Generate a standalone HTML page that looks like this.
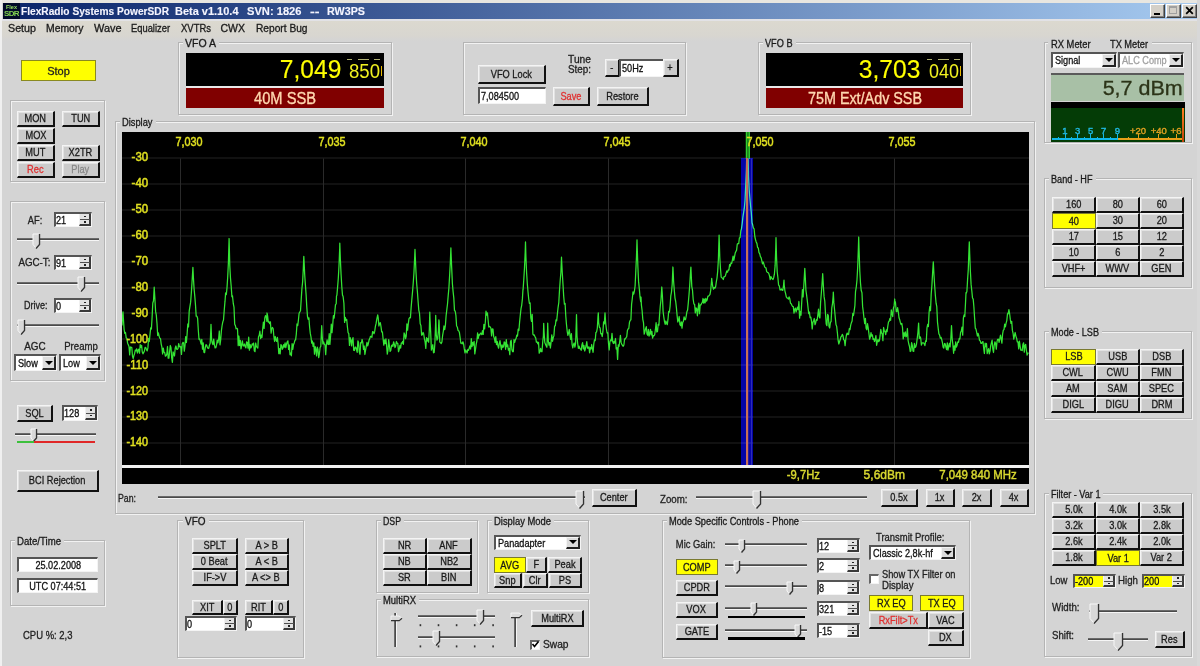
<!DOCTYPE html><html><head><meta charset="utf-8"><style>html,body{margin:0;padding:0}body{width:1200px;height:666px;overflow:hidden;position:relative;background:#d4d4d4;font-family:"Liberation Sans", sans-serif;font-size:11px;-webkit-text-stroke:0.3px currentColor}</style></head><body>
<div style="position:absolute;left:0px;top:0px;width:1200px;height:3px;background:#e8e6e0"></div>
<div style="position:absolute;left:0px;top:0px;width:2px;height:666px;background:#f0f0f0"></div>
<div style="position:absolute;left:1197px;top:0px;width:3px;height:666px;background:#d8d8d8"></div>
<div style="position:absolute;left:3px;top:3px;width:1194px;height:16px;background:linear-gradient(to right,#0a246a 0%,#a6caf0 100%)"></div>
<div style="position:absolute;left:3px;top:3px;width:17px;height:16px;background:#020a28"></div>
<svg style="position:absolute;left:4px;top:4px" width="15" height="13" viewBox="0 0 15 13"><g filter="url(#bl)"><text x="7.5" y="5" font-size="5.5" font-weight="bold" text-anchor="middle" fill="#98e060" font-family="Liberation Sans" style="-webkit-text-stroke:0.3px #98e060">Flex</text><text x="7.5" y="12" font-size="8" font-weight="bold" text-anchor="middle" fill="#80d050" font-family="Liberation Sans" style="-webkit-text-stroke:0.6px #80d050" letter-spacing="-0.6">SDR</text></g><defs><filter id="bl"><feGaussianBlur stdDeviation="0.35"/></filter></defs></svg>
<div style="position:absolute;left:21px;top:7.23px;font-size:10px;line-height:10px;color:#f4f4ff;white-space:nowrap;transform:scaleX(1.0164);transform-origin:left top;font-weight:bold;-webkit-text-stroke:0.1px #fff">FlexRadio Systems PowerSDR</div>
<div style="position:absolute;left:175px;top:7.23px;font-size:10px;line-height:10px;color:#f4f4ff;white-space:nowrap;transform:scaleX(1.0981);transform-origin:left top;font-weight:bold;-webkit-text-stroke:0.1px #fff">Beta v1.10.4</div>
<div style="position:absolute;left:247px;top:7.23px;font-size:10px;line-height:10px;color:#f4f4ff;white-space:nowrap;transform:scaleX(1.1140);transform-origin:left top;font-weight:bold;-webkit-text-stroke:0.1px #fff">SVN: 1826</div>
<div style="position:absolute;left:309.5px;top:7.23px;font-size:10px;line-height:10px;color:#f4f4ff;white-space:nowrap;transform:scaleX(1.4239);transform-origin:left top;font-weight:bold;-webkit-text-stroke:0.1px #fff">--</div>
<div style="position:absolute;left:327px;top:7.23px;font-size:10px;line-height:10px;color:#f4f4ff;white-space:nowrap;transform:scaleX(1.0737);transform-origin:left top;font-weight:bold;-webkit-text-stroke:0.1px #fff">RW3PS</div>
<div style="position:absolute;left:1150px;top:4px;width:15px;height:14px;box-sizing:border-box;background:#d4d0c8;border-top:1px solid #fff;border-left:1px solid #fff;border-right:1px solid #404040;border-bottom:1px solid #404040;box-shadow:inset -1px -1px 0 #808080"></div>
<div style="position:absolute;left:1166px;top:4px;width:15px;height:14px;box-sizing:border-box;background:#d4d0c8;border-top:1px solid #fff;border-left:1px solid #fff;border-right:1px solid #404040;border-bottom:1px solid #404040;box-shadow:inset -1px -1px 0 #808080"></div>
<div style="position:absolute;left:1182px;top:4px;width:15px;height:14px;box-sizing:border-box;background:#d4d0c8;border-top:1px solid #fff;border-left:1px solid #fff;border-right:1px solid #404040;border-bottom:1px solid #404040;box-shadow:inset -1px -1px 0 #808080"></div>
<div style="position:absolute;left:1154px;top:13px;width:6px;height:2px;background:#000"></div>
<div style="position:absolute;left:1169px;top:6px;width:8px;height:8px;box-sizing:border-box;border:1px solid #a0a0a0;border-top-width:2px"></div>
<svg style="position:absolute;left:1185px;top:6px" width="9" height="9"><path d="M1.2 1.2 L7.8 7.8 M7.8 1.2 L1.2 7.8" stroke="#000" stroke-width="1.8"/></svg>
<div style="position:absolute;left:2px;top:19px;width:1195px;height:22px;background:linear-gradient(to bottom,#dcd9cf,#d8d6d0 75%,#d4d4d4)"></div>
<div style="position:absolute;left:2px;top:19px;width:1195px;height:2px;background:#e2e2e6"></div>
<div style="position:absolute;left:8px;top:23.27px;font-size:10.5px;line-height:10.5px;color:#1a1a1a;white-space:nowrap;transform:scaleX(1.0199);transform-origin:left top;-webkit-text-stroke:0.3px #1a1a1a">Setup</div>
<div style="position:absolute;left:46px;top:23.27px;font-size:10.5px;line-height:10.5px;color:#1a1a1a;white-space:nowrap;transform:scaleX(0.9889);transform-origin:left top;-webkit-text-stroke:0.3px #1a1a1a">Memory</div>
<div style="position:absolute;left:93.5px;top:23.27px;font-size:10.5px;line-height:10.5px;color:#1a1a1a;white-space:nowrap;transform:scaleX(1.0396);transform-origin:left top;-webkit-text-stroke:0.3px #1a1a1a">Wave</div>
<div style="position:absolute;left:131px;top:23.27px;font-size:10.5px;line-height:10.5px;color:#1a1a1a;white-space:nowrap;transform:scaleX(0.8908);transform-origin:left top;-webkit-text-stroke:0.3px #1a1a1a">Equalizer</div>
<div style="position:absolute;left:181px;top:23.27px;font-size:10.5px;line-height:10.5px;color:#1a1a1a;white-space:nowrap;transform:scaleX(0.9018);transform-origin:left top;-webkit-text-stroke:0.3px #1a1a1a">XVTRs</div>
<div style="position:absolute;left:220.5px;top:23.27px;font-size:10.5px;line-height:10.5px;color:#1a1a1a;white-space:nowrap;transform:scaleX(1.0000);transform-origin:left top;-webkit-text-stroke:0.3px #1a1a1a">CWX</div>
<div style="position:absolute;left:255.5px;top:23.27px;font-size:10.5px;line-height:10.5px;color:#1a1a1a;white-space:nowrap;transform:scaleX(0.9694);transform-origin:left top;-webkit-text-stroke:0.3px #1a1a1a">Report Bug</div>
<div style="position:absolute;left:21px;top:60px;width:75px;height:21px;box-sizing:border-box;background:#ffff00;border:1px solid #8a8a20;display:flex;align-items:center;justify-content:center;font-size:11px;color:#222">Stop</div>
<div style="position:absolute;left:10px;top:100px;width:95px;height:82px;box-sizing:border-box;border:1px solid #b4b4b4;box-shadow:inset 1px 1px 0 #f2f2f2, 1px 1px 0 #f2f2f2"></div>
<div style="position:absolute;left:17px;top:111px;width:38px;height:16px;background:#cbcbcb;box-sizing:border-box;border-top:1px solid #f4f4f4;border-left:1px solid #f4f4f4;border-right:2px solid #111;border-bottom:2px solid #111;box-shadow:inset 1px 1px 0 #e2e2e2;display:flex;align-items:center;justify-content:center;font-size:10.5px;color:#1a1a1a;white-space:nowrap;line-height:10.5px"><span style="display:inline-block;transform:scaleX(0.88)">MON</span></div>
<div style="position:absolute;left:62px;top:111px;width:38px;height:16px;background:#cbcbcb;box-sizing:border-box;border-top:1px solid #f4f4f4;border-left:1px solid #f4f4f4;border-right:2px solid #111;border-bottom:2px solid #111;box-shadow:inset 1px 1px 0 #e2e2e2;display:flex;align-items:center;justify-content:center;font-size:10.5px;color:#1a1a1a;white-space:nowrap;line-height:10.5px"><span style="display:inline-block;transform:scaleX(0.88)">TUN</span></div>
<div style="position:absolute;left:17px;top:128px;width:38px;height:16px;background:#cbcbcb;box-sizing:border-box;border-top:1px solid #f4f4f4;border-left:1px solid #f4f4f4;border-right:2px solid #111;border-bottom:2px solid #111;box-shadow:inset 1px 1px 0 #e2e2e2;display:flex;align-items:center;justify-content:center;font-size:10.5px;color:#1a1a1a;white-space:nowrap;line-height:10.5px"><span style="display:inline-block;transform:scaleX(0.88)">MOX</span></div>
<div style="position:absolute;left:17px;top:145px;width:38px;height:16px;background:#cbcbcb;box-sizing:border-box;border-top:1px solid #f4f4f4;border-left:1px solid #f4f4f4;border-right:2px solid #111;border-bottom:2px solid #111;box-shadow:inset 1px 1px 0 #e2e2e2;display:flex;align-items:center;justify-content:center;font-size:10.5px;color:#1a1a1a;white-space:nowrap;line-height:10.5px"><span style="display:inline-block;transform:scaleX(0.88)">MUT</span></div>
<div style="position:absolute;left:62px;top:145px;width:38px;height:16px;background:#cbcbcb;box-sizing:border-box;border-top:1px solid #f4f4f4;border-left:1px solid #f4f4f4;border-right:2px solid #111;border-bottom:2px solid #111;box-shadow:inset 1px 1px 0 #e2e2e2;display:flex;align-items:center;justify-content:center;font-size:10.5px;color:#1a1a1a;white-space:nowrap;line-height:10.5px"><span style="display:inline-block;transform:scaleX(0.88)">X2TR</span></div>
<div style="position:absolute;left:17px;top:162px;width:38px;height:16px;background:#cbcbcb;box-sizing:border-box;border-top:1px solid #f4f4f4;border-left:1px solid #f4f4f4;border-right:2px solid #111;border-bottom:2px solid #111;box-shadow:inset 1px 1px 0 #e2e2e2;display:flex;align-items:center;justify-content:center;font-size:10.5px;color:#e03030;white-space:nowrap;line-height:10.5px"><span style="display:inline-block;transform:scaleX(0.88)">Rec</span></div>
<div style="position:absolute;left:62px;top:162px;width:38px;height:16px;background:#cbcbcb;box-sizing:border-box;border-top:1px solid #f4f4f4;border-left:1px solid #f4f4f4;border-right:2px solid #111;border-bottom:2px solid #111;box-shadow:inset 1px 1px 0 #e2e2e2;display:flex;align-items:center;justify-content:center;font-size:10.5px;color:#888;white-space:nowrap;line-height:10.5px"><span style="display:inline-block;transform:scaleX(0.88)">Play</span></div>
<div style="position:absolute;left:10px;top:201px;width:95px;height:180px;box-sizing:border-box;border:1px solid #b4b4b4;box-shadow:inset 1px 1px 0 #f2f2f2, 1px 1px 0 #f2f2f2"></div>
<div style="position:absolute;right:1158px;top:214.77px;font-size:10.5px;line-height:10.5px;color:#222;white-space:nowrap;text-align:right;transform:scaleX(0.8872);transform-origin:right top;">AF:</div>
<div style="position:absolute;left:54px;top:212px;width:38px;height:15px;box-sizing:border-box;background:#fff;border-top:2px solid #555;border-left:2px solid #555;border-right:1px solid #f4f4f4;border-bottom:1px solid #f4f4f4;font-size:10.5px;line-height:12px;color:#111;text-align:left;padding-left:0px;white-space:nowrap;overflow:hidden"><span style="display:inline-block;transform:scaleX(0.87);transform-origin:left center">21</span></div>
<div style="position:absolute;left:79px;top:214px;width:12px;height:12px;background:#e2e2e2;box-sizing:border-box;border-right:2px solid #3a3a3a;border-bottom:2px solid #3a3a3a;border-left:1px solid #f0f0f0"></div>
<div style="position:absolute;left:80px;top:219.3px;width:10px;height:1.2px;background:#505050"></div>
<div style="position:absolute;left:83.5px;top:215.9px;width:2px;height:1.5px;background:#222"></div>
<div style="position:absolute;left:83.5px;top:221.4px;width:2px;height:1.5px;background:#222"></div>
<div style="position:absolute;left:17px;top:238px;width:82px;height:3px;box-sizing:border-box;border-top:1px solid #6a6a6a;border-bottom:1px solid #f6f6f6;background:#4a4a4a"></div>
<svg style="position:absolute;left:32px;top:232.8px" width="10" height="18" viewBox="0 0 10 18"><path d="M1 1 H7 V11.5 L4.0 15 L1 11.5 Z" fill="#d8d8d8" stroke="#f8f8f8" stroke-width="1"/><path d="M7.5 1 V11.5 L4.0 15.5" fill="none" stroke="#333" stroke-width="1.4"/></svg>
<div style="position:absolute;right:1149.2px;top:256.77px;font-size:10.5px;line-height:10.5px;color:#222;white-space:nowrap;text-align:right;transform:scaleX(0.9296);transform-origin:right top;">AGC-T:</div>
<div style="position:absolute;left:54px;top:255px;width:38px;height:15px;box-sizing:border-box;background:#fff;border-top:2px solid #555;border-left:2px solid #555;border-right:1px solid #f4f4f4;border-bottom:1px solid #f4f4f4;font-size:10.5px;line-height:12px;color:#111;text-align:left;padding-left:0px;white-space:nowrap;overflow:hidden"><span style="display:inline-block;transform:scaleX(0.87);transform-origin:left center">91</span></div>
<div style="position:absolute;left:79px;top:257px;width:12px;height:12px;background:#e2e2e2;box-sizing:border-box;border-right:2px solid #3a3a3a;border-bottom:2px solid #3a3a3a;border-left:1px solid #f0f0f0"></div>
<div style="position:absolute;left:80px;top:262.3px;width:10px;height:1.2px;background:#505050"></div>
<div style="position:absolute;left:83.5px;top:258.9px;width:2px;height:1.5px;background:#222"></div>
<div style="position:absolute;left:83.5px;top:264.4px;width:2px;height:1.5px;background:#222"></div>
<div style="position:absolute;left:17px;top:281.5px;width:82px;height:3px;box-sizing:border-box;border-top:1px solid #6a6a6a;border-bottom:1px solid #f6f6f6;background:#4a4a4a"></div>
<svg style="position:absolute;left:77px;top:276.2px" width="10" height="18" viewBox="0 0 10 18"><path d="M1 1 H7 V11.5 L4.0 15 L1 11.5 Z" fill="#d8d8d8" stroke="#f8f8f8" stroke-width="1"/><path d="M7.5 1 V11.5 L4.0 15.5" fill="none" stroke="#333" stroke-width="1.4"/></svg>
<div style="position:absolute;right:1152.4px;top:299.77px;font-size:10.5px;line-height:10.5px;color:#222;white-space:nowrap;text-align:right;transform:scaleX(0.8570);transform-origin:right top;">Drive:</div>
<div style="position:absolute;left:54px;top:298px;width:38px;height:15px;box-sizing:border-box;background:#fff;border-top:2px solid #555;border-left:2px solid #555;border-right:1px solid #f4f4f4;border-bottom:1px solid #f4f4f4;font-size:10.5px;line-height:12px;color:#111;text-align:left;padding-left:0px;white-space:nowrap;overflow:hidden"><span style="display:inline-block;transform:scaleX(0.87);transform-origin:left center">0</span></div>
<div style="position:absolute;left:79px;top:300px;width:12px;height:12px;background:#e2e2e2;box-sizing:border-box;border-right:2px solid #3a3a3a;border-bottom:2px solid #3a3a3a;border-left:1px solid #f0f0f0"></div>
<div style="position:absolute;left:80px;top:305.3px;width:10px;height:1.2px;background:#505050"></div>
<div style="position:absolute;left:83.5px;top:301.9px;width:2px;height:1.5px;background:#222"></div>
<div style="position:absolute;left:83.5px;top:307.4px;width:2px;height:1.5px;background:#222"></div>
<div style="position:absolute;left:17px;top:324px;width:82px;height:3px;box-sizing:border-box;border-top:1px solid #6a6a6a;border-bottom:1px solid #f6f6f6;background:#4a4a4a"></div>
<svg style="position:absolute;left:16.5px;top:318.8px" width="10" height="18" viewBox="0 0 10 18"><path d="M1 1 H7 V11.5 L4.0 15 L1 11.5 Z" fill="#d8d8d8" stroke="#f8f8f8" stroke-width="1"/><path d="M7.5 1 V11.5 L4.0 15.5" fill="none" stroke="#333" stroke-width="1.4"/></svg>
<div style="position:absolute;left:-164.6px;width:400px;top:341.27px;font-size:10.5px;line-height:10.5px;color:#222;white-space:nowrap;text-align:center;transform:scaleX(0.9444);transform-origin:center top;">AGC</div>
<div style="position:absolute;left:-119.2px;width:400px;top:341.27px;font-size:10.5px;line-height:10.5px;color:#222;white-space:nowrap;text-align:center;transform:scaleX(0.9112);transform-origin:center top;">Preamp</div>
<div style="position:absolute;left:14px;top:354px;width:43px;height:17px;box-sizing:border-box;background:#fff;border-top:2px solid #555;border-left:2px solid #555;border-right:1px solid #f4f4f4;border-bottom:1px solid #f4f4f4;font-size:10.5px;line-height:14px;color:#111;text-align:left;padding-left:2px;white-space:nowrap;overflow:hidden"><span style="display:inline-block;transform:scaleX(0.87);transform-origin:left center">Slow</span></div>
<div style="position:absolute;left:42px;top:356px;width:14px;height:14px;background:#dcdcdc;box-sizing:border-box;border-top:1px solid #f4f4f4;border-left:1px solid #f4f4f4;border-right:2px solid #222;border-bottom:2px solid #222"></div>
<div style="position:absolute;left:45px;top:360.5px;width:0;height:0;border-left:4px solid transparent;border-right:4px solid transparent;border-top:4px solid #000"></div>
<div style="position:absolute;left:59px;top:354px;width:42px;height:17px;box-sizing:border-box;background:#fff;border-top:2px solid #555;border-left:2px solid #555;border-right:1px solid #f4f4f4;border-bottom:1px solid #f4f4f4;font-size:10.5px;line-height:14px;color:#111;text-align:left;padding-left:2px;white-space:nowrap;overflow:hidden"><span style="display:inline-block;transform:scaleX(0.87);transform-origin:left center">Low</span></div>
<div style="position:absolute;left:86px;top:356px;width:14px;height:14px;background:#dcdcdc;box-sizing:border-box;border-top:1px solid #f4f4f4;border-left:1px solid #f4f4f4;border-right:2px solid #222;border-bottom:2px solid #222"></div>
<div style="position:absolute;left:89px;top:360.5px;width:0;height:0;border-left:4px solid transparent;border-right:4px solid transparent;border-top:4px solid #000"></div>
<div style="position:absolute;left:17px;top:405px;width:36px;height:17px;background:#cbcbcb;box-sizing:border-box;border-top:1px solid #f4f4f4;border-left:1px solid #f4f4f4;border-right:2px solid #111;border-bottom:2px solid #111;box-shadow:inset 1px 1px 0 #e2e2e2;display:flex;align-items:center;justify-content:center;font-size:10.5px;color:#1a1a1a;white-space:nowrap;line-height:10.5px"><span style="display:inline-block;transform:scaleX(0.88)">SQL</span></div>
<div style="position:absolute;left:62px;top:405px;width:36px;height:16px;box-sizing:border-box;background:#fff;border-top:2px solid #555;border-left:2px solid #555;border-right:1px solid #f4f4f4;border-bottom:1px solid #f4f4f4;font-size:10.5px;line-height:13px;color:#111;text-align:left;padding-left:0px;white-space:nowrap;overflow:hidden"><span style="display:inline-block;transform:scaleX(0.87);transform-origin:left center">128</span></div>
<div style="position:absolute;left:85px;top:407px;width:12px;height:13px;background:#e2e2e2;box-sizing:border-box;border-right:2px solid #3a3a3a;border-bottom:2px solid #3a3a3a;border-left:1px solid #f0f0f0"></div>
<div style="position:absolute;left:86px;top:412.8px;width:10px;height:1.2px;background:#505050"></div>
<div style="position:absolute;left:89.5px;top:409.4px;width:2px;height:1.5px;background:#222"></div>
<div style="position:absolute;left:89.5px;top:414.9px;width:2px;height:1.5px;background:#222"></div>
<div style="position:absolute;left:15px;top:432.5px;width:81px;height:3px;box-sizing:border-box;border-top:1px solid #6a6a6a;border-bottom:1px solid #f6f6f6;background:#4a4a4a"></div>
<svg style="position:absolute;left:30px;top:427.9px" width="9" height="16" viewBox="0 0 9 16"><path d="M1 1 H6 V10.0 L3.5 13 L1 10.0 Z" fill="#d8d8d8" stroke="#f8f8f8" stroke-width="1"/><path d="M6.5 1 V10.0 L3.5 13.5" fill="none" stroke="#333" stroke-width="1.4"/></svg>
<div style="position:absolute;left:17px;top:441px;width:17px;height:2px;background:#3cc03c"></div>
<div style="position:absolute;left:34px;top:441px;width:61px;height:2px;background:#e02828"></div>
<div style="position:absolute;left:17px;top:470px;width:82px;height:22px;background:#cbcbcb;box-sizing:border-box;border-top:1px solid #f4f4f4;border-left:1px solid #f4f4f4;border-right:2px solid #111;border-bottom:2px solid #111;box-shadow:inset 1px 1px 0 #e2e2e2;display:flex;align-items:center;justify-content:center;font-size:10.5px;color:#1a1a1a;white-space:nowrap;line-height:10.5px"><span style="display:inline-block;transform:scaleX(0.88)">BCI Rejection</span></div>
<div style="position:absolute;left:10px;top:540px;width:95px;height:66px;box-sizing:border-box;border:1px solid #b4b4b4;box-shadow:inset 1px 1px 0 #f2f2f2, 1px 1px 0 #f2f2f2"></div>
<div style="position:absolute;left:15px;top:538px;width:49px;height:4px;background:#d4d4d4"></div>
<div style="position:absolute;left:17px;top:536.62px;font-size:10px;line-height:10px;color:#1a1a1a;white-space:nowrap;transform:scaleX(0.9614);transform-origin:left top;">Date/Time</div>
<div style="position:absolute;left:17px;top:557px;width:81px;height:15px;box-sizing:border-box;background:#fff;border-top:2px solid #555;border-left:2px solid #555;border-right:1px solid #f4f4f4;border-bottom:1px solid #f4f4f4;font-size:10.5px;line-height:12px;color:#111;text-align:center;padding-left:0px;white-space:nowrap;overflow:hidden"><span style="display:inline-block;transform:scaleX(0.87);transform-origin:center center">25.02.2008</span></div>
<div style="position:absolute;left:17px;top:578px;width:81px;height:15px;box-sizing:border-box;background:#fff;border-top:2px solid #555;border-left:2px solid #555;border-right:1px solid #f4f4f4;border-bottom:1px solid #f4f4f4;font-size:10.5px;line-height:12px;color:#111;text-align:center;padding-left:0px;white-space:nowrap;overflow:hidden"><span style="display:inline-block;transform:scaleX(0.87);transform-origin:center center">UTC 07:44:51</span></div>
<div style="position:absolute;left:22.8px;top:629.77px;font-size:10.5px;line-height:10.5px;color:#222;white-space:nowrap;transform:scaleX(0.9023);transform-origin:left top;">CPU %: 2,3</div>
<div style="position:absolute;left:178px;top:42px;width:214px;height:73px;box-sizing:border-box;border:1px solid #b4b4b4;box-shadow:inset 1px 1px 0 #f2f2f2, 1px 1px 0 #f2f2f2"></div>
<div style="position:absolute;left:183px;top:40px;width:36px;height:4px;background:#d4d4d4"></div>
<div style="position:absolute;left:185px;top:38.62px;font-size:10px;line-height:10px;color:#1a1a1a;white-space:nowrap;transform:scaleX(1.0525);transform-origin:left top;">VFO A</div>
<div style="position:absolute;left:186px;top:52.5px;width:198px;height:33.5px;background:#000"></div>
<div style="position:absolute;left:186px;top:86px;width:198px;height:2px;background:#e8e8e8"></div>
<div style="position:absolute;left:186px;top:88px;width:198px;height:20px;background:#800000"></div>
<div style="position:absolute;left:85.0px;width:400px;top:90.62px;font-size:16px;line-height:16px;color:#ffd8b0;white-space:nowrap;text-align:center;transform:scaleX(0.9172);transform-origin:center top;-webkit-text-stroke:0.35px #ffd8b0">40M SSB</div>
<div style="position:absolute;right:859px;top:55.89px;font-size:26.5px;line-height:26.5px;color:#ffff00;white-space:nowrap;text-align:right;transform:scaleX(0.9272);transform-origin:right top;-webkit-text-stroke:0.15px #ff0">7,049</div>
<div style="position:absolute;left:349px;top:61.71px;font-size:19.5px;line-height:19.5px;color:#f0f020;white-space:nowrap;transform:scaleX(0.9525);transform-origin:left top;-webkit-text-stroke:0px">850</div>
<div style="position:absolute;left:346.5px;top:58.8px;width:5.5px;height:1.2000000000000028px;background:#b0b070"></div>
<div style="position:absolute;left:357.5px;top:58.8px;width:11.5px;height:1.2000000000000028px;background:#b0b070"></div>
<div style="position:absolute;left:374px;top:58.8px;width:5.5px;height:1.2000000000000028px;background:#b0b070"></div>
<div style="position:absolute;left:380.5px;top:66px;width:1.5px;height:10px;background:#e8b800"></div>
<div style="position:absolute;left:758px;top:42px;width:213px;height:73px;box-sizing:border-box;border:1px solid #b4b4b4;box-shadow:inset 1px 1px 0 #f2f2f2, 1px 1px 0 #f2f2f2"></div>
<div style="position:absolute;left:763px;top:40px;width:32.5px;height:4px;background:#d4d4d4"></div>
<div style="position:absolute;left:765px;top:38.62px;font-size:10px;line-height:10px;color:#1a1a1a;white-space:nowrap;transform:scaleX(0.9162);transform-origin:left top;">VFO B</div>
<div style="position:absolute;left:766px;top:52.5px;width:197px;height:33.5px;background:#000"></div>
<div style="position:absolute;left:766px;top:86px;width:197px;height:2px;background:#e8e8e8"></div>
<div style="position:absolute;left:766px;top:88px;width:197px;height:20px;background:#800000"></div>
<div style="position:absolute;left:664.5px;width:400px;top:90.62px;font-size:16px;line-height:16px;color:#ffd8b0;white-space:nowrap;text-align:center;transform:scaleX(0.8964);transform-origin:center top;-webkit-text-stroke:0.35px #ffd8b0">75M Ext/Adv SSB</div>
<div style="position:absolute;right:279.5px;top:55.89px;font-size:26.5px;line-height:26.5px;color:#ffff00;white-space:nowrap;text-align:right;transform:scaleX(0.9272);transform-origin:right top;-webkit-text-stroke:0.15px #ff0">3,703</div>
<div style="position:absolute;left:929px;top:61.71px;font-size:19.5px;line-height:19.5px;color:#f0f020;white-space:nowrap;transform:scaleX(0.9217);transform-origin:left top;-webkit-text-stroke:0px">040</div>
<div style="position:absolute;left:926.5px;top:58.8px;width:5.5px;height:1.2000000000000028px;background:#b0b070"></div>
<div style="position:absolute;left:937.5px;top:58.8px;width:11.5px;height:1.2000000000000028px;background:#b0b070"></div>
<div style="position:absolute;left:954px;top:58.8px;width:5.5px;height:1.2000000000000028px;background:#b0b070"></div>
<div style="position:absolute;left:959.5px;top:66px;width:1.5px;height:10px;background:#e8b800"></div>
<div style="position:absolute;left:463px;top:42px;width:223px;height:73px;box-sizing:border-box;border:1px solid #b4b4b4;box-shadow:inset 1px 1px 0 #f2f2f2, 1px 1px 0 #f2f2f2"></div>
<div style="position:absolute;left:478px;top:65px;width:68px;height:19px;background:#cbcbcb;box-sizing:border-box;border-top:1px solid #f4f4f4;border-left:1px solid #f4f4f4;border-right:2px solid #111;border-bottom:2px solid #111;box-shadow:inset 1px 1px 0 #e2e2e2;display:flex;align-items:center;justify-content:center;font-size:10.5px;color:#1a1a1a;white-space:nowrap;line-height:10.5px"><span style="display:inline-block;transform:scaleX(0.88)">VFO Lock</span></div>
<div style="position:absolute;left:478px;top:87px;width:68px;height:17px;box-sizing:border-box;background:#fff;border-top:2px solid #555;border-left:2px solid #555;border-right:1px solid #f4f4f4;border-bottom:1px solid #f4f4f4;font-size:10.5px;line-height:14px;color:#111;text-align:left;padding-left:1px;white-space:nowrap;overflow:hidden"><span style="display:inline-block;transform:scaleX(0.87);transform-origin:left center">7,084500</span></div>
<div style="position:absolute;left:568px;top:54.27px;font-size:10.5px;line-height:10.5px;color:#222;white-space:nowrap;transform:scaleX(0.9768);transform-origin:left top;">Tune</div>
<div style="position:absolute;left:568px;top:63.77px;font-size:10.5px;line-height:10.5px;color:#222;white-space:nowrap;transform:scaleX(0.9376);transform-origin:left top;">Step:</div>
<div style="position:absolute;left:605px;top:59px;width:15px;height:18px;background:#cbcbcb;box-sizing:border-box;border-top:1px solid #f4f4f4;border-left:1px solid #f4f4f4;border-right:2px solid #111;border-bottom:2px solid #111;box-shadow:inset 1px 1px 0 #e2e2e2;display:flex;align-items:center;justify-content:center;font-size:10.5px;color:#1a1a1a;white-space:nowrap;line-height:10.5px"><span style="display:inline-block;transform:scaleX(0.88)">-</span></div>
<div style="position:absolute;left:619px;top:59px;width:45px;height:18px;box-sizing:border-box;background:#fff;border-top:2px solid #555;border-left:2px solid #555;border-right:1px solid #f4f4f4;border-bottom:1px solid #f4f4f4;font-size:10.5px;line-height:15px;color:#111;text-align:left;padding-left:1px;white-space:nowrap;overflow:hidden"><span style="display:inline-block;transform:scaleX(0.87);transform-origin:left center">50Hz</span></div>
<div style="position:absolute;left:663px;top:59px;width:16px;height:18px;background:#cbcbcb;box-sizing:border-box;border-top:1px solid #f4f4f4;border-left:1px solid #f4f4f4;border-right:2px solid #111;border-bottom:2px solid #111;box-shadow:inset 1px 1px 0 #e2e2e2;display:flex;align-items:center;justify-content:center;font-size:10.5px;color:#1a1a1a;white-space:nowrap;line-height:10.5px"><span style="display:inline-block;transform:scaleX(0.88)">+</span></div>
<div style="position:absolute;left:553px;top:87px;width:37px;height:19px;background:#cbcbcb;box-sizing:border-box;border-top:1px solid #f4f4f4;border-left:1px solid #f4f4f4;border-right:2px solid #111;border-bottom:2px solid #111;box-shadow:inset 1px 1px 0 #e2e2e2;display:flex;align-items:center;justify-content:center;font-size:10.5px;color:#e03030;white-space:nowrap;line-height:10.5px"><span style="display:inline-block;transform:scaleX(0.88)">Save</span></div>
<div style="position:absolute;left:597px;top:87px;width:52px;height:19px;background:#cbcbcb;box-sizing:border-box;border-top:1px solid #f4f4f4;border-left:1px solid #f4f4f4;border-right:2px solid #111;border-bottom:2px solid #111;box-shadow:inset 1px 1px 0 #e2e2e2;display:flex;align-items:center;justify-content:center;font-size:10.5px;color:#1a1a1a;white-space:nowrap;line-height:10.5px"><span style="display:inline-block;transform:scaleX(0.88)">Restore</span></div>
<div style="position:absolute;left:1044px;top:42px;width:148px;height:101px;box-sizing:border-box;border:1px solid #b4b4b4;box-shadow:inset 1px 1px 0 #f2f2f2, 1px 1px 0 #f2f2f2"></div>
<div style="position:absolute;left:1048px;top:40px;width:104px;height:4px;background:#d4d4d4"></div>
<div style="position:absolute;left:1051px;top:39.07px;font-size:10.5px;line-height:10.5px;color:#1a1a1a;white-space:nowrap;transform:scaleX(0.8908);transform-origin:left top;">RX Meter</div>
<div style="position:absolute;left:1110.3px;top:39.07px;font-size:10.5px;line-height:10.5px;color:#1a1a1a;white-space:nowrap;transform:scaleX(0.8799);transform-origin:left top;">TX Meter</div>
<div style="position:absolute;left:1051px;top:52px;width:66px;height:16px;box-sizing:border-box;background:#fff;border-top:2px solid #555;border-left:2px solid #555;border-right:1px solid #f4f4f4;border-bottom:1px solid #f4f4f4;font-size:10.5px;line-height:13px;color:#111;text-align:left;padding-left:2px;white-space:nowrap;overflow:hidden"><span style="display:inline-block;transform:scaleX(0.87);transform-origin:left center">Signal</span></div>
<div style="position:absolute;left:1102px;top:54px;width:14px;height:13px;background:#dcdcdc;box-sizing:border-box;border-top:1px solid #f4f4f4;border-left:1px solid #f4f4f4;border-right:2px solid #222;border-bottom:2px solid #222"></div>
<div style="position:absolute;left:1105px;top:58.0px;width:0;height:0;border-left:4px solid transparent;border-right:4px solid transparent;border-top:4px solid #000"></div>
<div style="position:absolute;left:1118px;top:52px;width:66px;height:16px;box-sizing:border-box;background:#fff;border-top:2px solid #555;border-left:2px solid #555;border-right:1px solid #f4f4f4;border-bottom:1px solid #f4f4f4;font-size:10.5px;line-height:13px;color:#a0a0a0;text-align:left;padding-left:2px;white-space:nowrap;overflow:hidden"><span style="display:inline-block;transform:scaleX(0.87);transform-origin:left center">ALC Comp</span></div>
<div style="position:absolute;left:1169px;top:54px;width:14px;height:13px;background:#dcdcdc;box-sizing:border-box;border-top:1px solid #f4f4f4;border-left:1px solid #f4f4f4;border-right:2px solid #222;border-bottom:2px solid #222"></div>
<div style="position:absolute;left:1172px;top:58.0px;width:0;height:0;border-left:4px solid transparent;border-right:4px solid transparent;border-top:4px solid #000"></div>
<div style="position:absolute;left:1051px;top:73px;width:133px;height:28px;background:#a8c0a6;border-top:2px solid #5a5a5a;box-sizing:border-box"></div>
<div style="position:absolute;right:17.5px;top:78.71px;font-size:19.5px;line-height:19.5px;color:#2c3418;white-space:nowrap;text-align:right;transform:scaleX(1.1015);transform-origin:right top;">5,7 dBm</div>
<div style="position:absolute;left:1051px;top:102px;width:134px;height:6px;background:#000"></div>
<div style="position:absolute;left:1051px;top:108px;width:134px;height:34px;background:#043c06"></div>
<div style="position:absolute;left:1182px;top:108px;width:2px;height:34px;background:linear-gradient(to bottom,#ff8020,#c04008)"></div>
<div style="position:absolute;left:1052px;top:138px;width:66px;height:2px;background:#10b8e8"></div>
<div style="position:absolute;left:1118px;top:138px;width:64px;height:2px;background:#e8a018"></div>
<div style="position:absolute;left:1064.5px;top:133.5px;width:1.2000000000000455px;height:5.5px;background:#10b8e8"></div>
<div style="position:absolute;left:865px;width:400px;top:125.88px;font-size:9.5px;line-height:9.5px;color:#20b8e0;white-space:nowrap;text-align:center;-webkit-text-stroke:0.4px #20b8e0">1</div>
<div style="position:absolute;left:1077.1px;top:133.5px;width:1.2000000000000455px;height:5.5px;background:#10b8e8"></div>
<div style="position:absolute;left:877.5999999999999px;width:400px;top:125.88px;font-size:9.5px;line-height:9.5px;color:#20b8e0;white-space:nowrap;text-align:center;-webkit-text-stroke:0.4px #20b8e0">3</div>
<div style="position:absolute;left:1090.1px;top:133.5px;width:1.2000000000000455px;height:5.5px;background:#10b8e8"></div>
<div style="position:absolute;left:890.5999999999999px;width:400px;top:125.88px;font-size:9.5px;line-height:9.5px;color:#20b8e0;white-space:nowrap;text-align:center;-webkit-text-stroke:0.4px #20b8e0">5</div>
<div style="position:absolute;left:1103.1px;top:133.5px;width:1.2000000000000455px;height:5.5px;background:#10b8e8"></div>
<div style="position:absolute;left:903.5999999999999px;width:400px;top:125.88px;font-size:9.5px;line-height:9.5px;color:#20b8e0;white-space:nowrap;text-align:center;-webkit-text-stroke:0.4px #20b8e0">7</div>
<div style="position:absolute;left:1116.9px;top:133.5px;width:1.2000000000000455px;height:5.5px;background:#10b8e8"></div>
<div style="position:absolute;left:917.4000000000001px;width:400px;top:125.88px;font-size:9.5px;line-height:9.5px;color:#20b8e0;white-space:nowrap;text-align:center;-webkit-text-stroke:0.4px #20b8e0">9</div>
<div style="position:absolute;left:1058.0px;top:136.5px;width:1.0px;height:2.5px;background:#10b8e8"></div>
<div style="position:absolute;left:1071.0px;top:136.5px;width:1.0px;height:2.5px;background:#10b8e8"></div>
<div style="position:absolute;left:1083.5px;top:136.5px;width:1.0px;height:2.5px;background:#10b8e8"></div>
<div style="position:absolute;left:1096.5px;top:136.5px;width:1.0px;height:2.5px;background:#10b8e8"></div>
<div style="position:absolute;left:1109.5px;top:136.5px;width:1.0px;height:2.5px;background:#10b8e8"></div>
<div style="position:absolute;left:1137.5px;top:133.5px;width:1.2000000000000455px;height:5.5px;background:#e8a018"></div>
<div style="position:absolute;left:938px;width:400px;top:125.88px;font-size:9.5px;line-height:9.5px;color:#e0a020;white-space:nowrap;text-align:center;-webkit-text-stroke:0.4px #e0a020">+20</div>
<div style="position:absolute;left:1158.2px;top:133.5px;width:1.2000000000000455px;height:5.5px;background:#e8a018"></div>
<div style="position:absolute;left:958.7px;width:400px;top:125.88px;font-size:9.5px;line-height:9.5px;color:#e0a020;white-space:nowrap;text-align:center;-webkit-text-stroke:0.4px #e0a020">+40</div>
<div style="position:absolute;left:1175.5px;top:133.5px;width:1.2000000000000455px;height:5.5px;background:#e8a018"></div>
<div style="position:absolute;left:976px;width:400px;top:125.88px;font-size:9.5px;line-height:9.5px;color:#e0a020;white-space:nowrap;text-align:center;-webkit-text-stroke:0.4px #e0a020">+6</div>
<div style="position:absolute;left:1127.5px;top:136.5px;width:1.0px;height:2.5px;background:#e8a018"></div>
<div style="position:absolute;left:1147.5px;top:136.5px;width:1.0px;height:2.5px;background:#e8a018"></div>
<div style="position:absolute;left:1167.5px;top:136.5px;width:1.0px;height:2.5px;background:#e8a018"></div>
<div style="position:absolute;left:115px;top:121px;width:920px;height:393px;box-sizing:border-box;border:1px solid #b4b4b4;box-shadow:inset 1px 1px 0 #f2f2f2, 1px 1px 0 #f2f2f2"></div>
<div style="position:absolute;left:120px;top:119px;width:35.5px;height:4px;background:#d4d4d4"></div>
<div style="position:absolute;left:122px;top:117.62px;font-size:10px;line-height:10px;color:#1a1a1a;white-space:nowrap;transform:scaleX(0.9300);transform-origin:left top;">Display</div>
<div style="position:absolute;left:122px;top:131.5px;width:907px;height:333.0px;background:#000"></div>
<div style="position:absolute;left:122px;top:464.5px;width:907px;height:3.0px;background:#f0f0f0"></div>
<div style="position:absolute;left:122px;top:467.5px;width:907px;height:16.0px;background:#000"></div>
<svg style="position:absolute;left:122px;top:131.5px" width="907" height="333.0" viewBox="122 131.5 907 333.0"><line x1="122" y1="157.50" x2="1029" y2="157.50" stroke="#222" stroke-width="1"/><line x1="122" y1="183.50" x2="1029" y2="183.50" stroke="#222" stroke-width="1"/><line x1="122" y1="209.50" x2="1029" y2="209.50" stroke="#222" stroke-width="1"/><line x1="122" y1="235.50" x2="1029" y2="235.50" stroke="#222" stroke-width="1"/><line x1="122" y1="261.50" x2="1029" y2="261.50" stroke="#222" stroke-width="1"/><line x1="122" y1="287.50" x2="1029" y2="287.50" stroke="#222" stroke-width="1"/><line x1="122" y1="312.50" x2="1029" y2="312.50" stroke="#222" stroke-width="1"/><line x1="122" y1="338.50" x2="1029" y2="338.50" stroke="#222" stroke-width="1"/><line x1="122" y1="364.50" x2="1029" y2="364.50" stroke="#222" stroke-width="1"/><line x1="122" y1="390.50" x2="1029" y2="390.50" stroke="#222" stroke-width="1"/><line x1="122" y1="416.50" x2="1029" y2="416.50" stroke="#222" stroke-width="1"/><line x1="122" y1="442.50" x2="1029" y2="442.50" stroke="#222" stroke-width="1"/><line x1="180.50" y1="158" x2="180.50" y2="464.5" stroke="#2a2a2a" stroke-width="1"/><line x1="323.50" y1="158" x2="323.50" y2="464.5" stroke="#2a2a2a" stroke-width="1"/><line x1="465.50" y1="158" x2="465.50" y2="464.5" stroke="#2a2a2a" stroke-width="1"/><line x1="608.50" y1="158" x2="608.50" y2="464.5" stroke="#2a2a2a" stroke-width="1"/><line x1="751.50" y1="158" x2="751.50" y2="464.5" stroke="#2a2a2a" stroke-width="1"/><line x1="894.50" y1="158" x2="894.50" y2="464.5" stroke="#2a2a2a" stroke-width="1"/><polyline fill="none" stroke="#34e434" stroke-width="1.25" stroke-linejoin="round" points="122.00,324.9 122.70,313.7 123.00,311.3 123.40,318.2 124.10,328.8 124.80,332.8 125.50,332.0 126.20,337.3 126.90,337.9 127.60,342.7 128.30,344.2 129.00,346.1 129.70,354.4 130.40,346.5 131.10,346.7 131.80,347.0 132.50,355.8 133.20,358.0 133.90,355.1 134.60,353.0 135.30,349.6 136.00,350.3 136.70,348.3 137.40,352.5 138.10,349.6 138.80,348.7 139.50,352.7 140.20,344.1 140.90,346.9 141.60,344.9 142.30,351.6 143.00,353.3 143.70,351.9 144.40,350.4 145.10,346.8 145.80,347.1 146.50,349.1 147.20,350.4 147.90,347.4 148.60,337.8 149.30,341.0 150.00,333.9 150.70,327.4 151.40,328.5 152.10,316.7 152.80,302.5 153.50,300.3 154.20,286.7 154.90,298.2 155.60,310.9 156.30,314.5 157.00,323.0 157.70,335.0 158.40,332.3 159.10,335.6 159.80,337.7 160.50,338.0 161.20,343.6 161.90,346.6 162.60,353.5 163.30,347.7 164.00,351.7 164.70,352.1 165.40,355.6 166.10,355.2 166.80,353.5 167.50,346.0 168.20,357.6 168.90,357.7 169.60,351.1 170.30,345.0 171.00,347.2 171.70,357.4 172.40,361.8 173.10,351.4 173.80,353.6 174.50,355.5 175.20,347.6 175.90,345.5 176.60,348.7 177.30,348.9 178.00,348.1 178.70,343.2 179.40,345.8 180.10,346.5 180.80,346.1 181.50,353.9 182.20,343.6 182.90,341.9 183.60,342.2 184.30,350.6 185.00,345.2 185.70,336.1 186.40,342.0 187.10,333.6 187.80,323.5 188.50,326.4 189.20,310.7 189.90,306.2 190.60,301.9 191.30,292.9 192.00,282.2 192.70,270.5 192.90,266.8 193.40,277.1 194.10,288.5 194.80,295.9 195.50,304.5 196.20,315.7 196.90,315.6 197.60,317.8 198.30,329.5 199.00,338.8 199.70,338.5 200.40,340.7 201.10,343.6 201.80,338.9 202.50,348.6 203.20,342.4 203.90,351.7 204.60,352.2 205.30,347.0 206.00,344.2 206.70,344.8 207.40,346.9 208.10,348.0 208.80,347.6 209.50,344.5 210.20,342.7 210.90,326.7 211.00,323.8 211.60,339.3 212.30,342.5 213.00,344.2 213.70,338.7 214.40,343.9 215.10,347.4 215.80,347.2 216.50,344.9 217.20,339.7 217.90,342.4 218.60,338.7 219.30,330.5 220.00,344.3 220.70,339.1 221.40,330.2 222.10,325.0 222.80,321.4 223.50,319.5 224.20,310.3 224.90,301.9 225.00,301.2 225.60,292.5 226.30,294.2 227.00,287.4 227.70,276.5 228.40,262.0 229.10,238.0 229.80,265.5 230.50,277.7 231.20,285.7 231.90,296.1 232.50,295.4 232.60,296.5 233.30,303.2 234.00,306.6 234.70,323.7 235.40,325.1 236.10,328.3 236.80,327.8 237.50,328.2 238.20,345.2 238.90,335.5 239.60,345.0 240.30,339.8 241.00,348.4 241.70,344.4 242.40,340.3 243.10,345.4 243.80,345.5 244.50,343.5 245.20,345.9 245.90,347.4 246.60,341.4 247.30,342.2 248.00,347.6 248.70,336.7 249.40,349.7 250.10,344.0 250.80,347.3 251.50,346.2 252.20,343.4 252.90,344.4 253.60,342.6 254.30,350.3 255.00,351.2 255.70,342.5 256.40,346.3 257.10,346.6 257.80,347.6 258.50,336.2 259.20,334.9 259.90,330.7 260.60,338.2 261.30,334.6 262.00,337.0 262.70,328.3 263.40,321.6 264.10,328.0 264.80,317.4 265.50,315.1 266.20,316.5 266.90,320.8 267.00,312.5 267.60,315.4 268.30,321.6 269.00,321.2 269.70,323.2 270.40,321.3 271.10,332.6 271.80,327.9 272.50,327.0 273.20,328.3 273.90,336.2 274.60,341.0 275.30,336.0 276.00,339.5 276.70,340.9 277.40,336.8 278.10,343.2 278.80,353.1 279.50,348.1 280.20,353.3 280.90,344.2 281.60,344.7 282.30,348.8 283.00,347.5 283.70,344.1 284.40,346.6 285.10,342.3 285.80,347.1 286.50,343.7 287.20,341.3 287.90,340.3 288.60,349.0 289.30,344.5 290.00,354.2 290.70,352.6 291.40,355.3 292.10,343.2 292.80,348.9 293.50,344.2 294.20,342.5 294.90,339.8 295.60,339.4 296.30,333.6 297.00,323.5 297.70,325.1 298.40,319.8 299.10,312.8 299.80,311.5 300.50,310.2 301.20,299.1 301.90,288.3 302.60,281.6 303.30,268.4 303.80,255.9 304.00,259.4 304.70,274.3 305.40,284.4 306.10,294.1 306.80,306.6 307.50,316.0 308.20,318.8 308.90,317.3 309.60,326.5 310.30,332.9 311.00,336.5 311.70,342.7 312.40,340.5 313.10,345.9 313.80,342.4 314.50,353.6 315.20,346.1 315.90,349.2 316.60,355.4 317.30,346.6 318.00,349.0 318.70,357.2 319.40,353.3 320.10,347.0 320.80,345.7 321.50,329.5 321.70,325.2 322.20,335.7 322.90,343.5 323.60,341.4 324.30,343.6 325.00,344.5 325.70,354.2 326.40,343.8 327.10,339.3 327.80,343.7 328.50,344.0 329.20,333.2 329.90,343.9 330.60,335.4 331.30,323.7 332.00,332.1 332.70,324.6 333.40,315.2 334.10,317.6 334.80,311.4 335.50,304.1 336.20,303.4 336.50,295.5 336.90,294.7 337.60,286.5 338.30,277.7 339.00,265.2 339.70,247.7 339.80,242.7 340.40,259.4 341.10,274.2 341.80,286.3 342.50,294.7 343.00,295.6 343.20,296.7 343.90,302.8 344.60,321.9 345.30,316.9 346.00,319.9 346.70,318.9 347.40,326.3 348.10,332.2 348.80,333.2 349.50,344.9 350.20,337.1 350.90,339.7 351.60,345.4 352.30,339.4 353.00,337.1 353.70,349.8 354.40,350.0 355.10,346.6 355.80,346.6 356.50,349.0 357.20,351.9 357.90,340.3 358.60,342.3 359.30,351.4 360.00,353.8 360.70,342.1 361.40,342.4 362.10,339.0 362.80,342.0 363.50,349.0 364.20,345.5 364.90,354.0 365.60,349.7 366.30,345.6 367.00,341.9 367.70,345.4 368.40,343.0 369.10,339.4 369.80,338.1 370.50,335.8 371.20,335.9 371.90,336.8 372.60,331.2 373.30,331.4 374.00,333.2 374.70,330.9 375.40,325.8 376.10,322.9 376.80,318.6 377.50,315.3 377.70,314.3 378.20,317.4 378.90,325.5 379.60,322.9 380.30,322.1 381.00,326.2 381.70,331.3 382.40,331.3 383.10,338.3 383.80,344.6 384.50,339.3 385.20,343.2 385.90,338.3 386.60,345.3 387.30,353.6 388.00,349.6 388.70,339.1 389.40,345.2 390.10,350.8 390.80,349.9 391.50,345.1 392.20,344.5 392.90,345.9 393.60,341.3 394.30,343.6 395.00,347.0 395.70,345.4 396.40,341.0 397.10,342.8 397.80,342.9 398.50,351.2 399.20,349.0 399.90,344.8 400.60,347.7 401.30,342.5 402.00,342.7 402.70,340.8 403.40,343.8 404.10,332.4 404.80,333.9 405.50,338.2 406.20,335.9 406.90,323.3 407.60,329.7 408.30,323.2 409.00,318.1 409.70,317.2 410.40,317.4 411.10,307.4 411.80,299.3 412.50,291.6 413.20,283.0 413.90,273.3 414.60,258.3 415.00,248.9 415.30,256.6 416.00,271.6 416.70,283.3 417.40,291.2 418.10,301.0 418.80,309.6 419.50,312.8 420.20,323.3 420.90,324.9 421.60,334.7 422.30,334.3 423.00,331.8 423.70,333.5 424.40,338.2 425.10,341.4 425.80,347.9 426.50,337.2 427.20,340.5 427.90,338.0 428.60,341.6 429.30,329.5 429.80,311.7 430.00,318.1 430.70,332.1 431.40,349.6 432.10,347.2 432.80,344.2 433.50,352.3 434.20,351.9 434.90,342.5 435.60,322.7 435.70,314.8 436.30,334.0 437.00,339.6 437.70,337.9 438.40,330.3 438.90,319.3 439.10,320.5 439.80,341.6 440.50,342.2 441.20,343.1 441.90,341.6 442.60,335.2 443.30,331.0 444.00,325.4 444.70,329.2 445.40,324.9 446.10,315.2 446.80,309.4 447.50,303.5 448.20,295.1 448.90,287.5 449.60,275.4 450.30,262.3 450.90,247.4 451.00,251.3 451.70,267.6 452.40,283.2 453.10,291.1 453.80,297.4 454.50,310.1 455.20,310.5 455.90,314.9 456.60,325.5 457.30,326.5 458.00,329.9 458.70,330.2 459.40,331.9 460.10,336.8 460.80,342.7 461.50,342.5 462.20,343.3 462.90,341.3 463.60,343.4 464.30,348.4 465.00,352.3 465.70,349.5 466.40,350.7 467.10,352.5 467.80,349.0 468.50,349.8 469.20,347.6 469.90,345.4 470.60,348.5 471.30,338.1 472.00,346.2 472.70,342.0 473.40,344.6 474.10,340.9 474.80,353.4 475.50,349.0 476.20,343.6 476.90,340.5 477.60,332.3 478.30,337.8 479.00,334.2 479.70,334.5 480.40,332.7 481.10,332.8 481.80,334.1 482.50,330.2 483.20,333.9 483.90,323.9 484.60,328.4 485.30,322.0 486.00,310.6 486.70,314.6 486.90,314.3 487.40,312.4 488.10,319.5 488.80,326.5 489.50,325.9 490.20,326.4 490.90,327.7 491.60,335.4 492.30,328.4 493.00,328.6 493.70,336.3 494.40,337.8 495.10,341.8 495.80,336.2 496.50,344.1 497.20,340.9 497.90,345.4 498.60,347.7 499.30,343.0 500.00,340.1 500.70,345.1 501.40,349.1 502.10,344.3 502.80,346.9 503.50,346.2 504.20,341.4 504.90,342.1 505.60,348.8 506.30,339.1 507.00,346.2 507.70,344.4 508.40,349.6 509.10,348.0 509.80,354.2 510.50,341.1 511.20,339.7 511.90,349.0 512.60,351.2 513.30,351.2 514.00,339.1 514.70,341.8 515.40,339.2 516.10,337.9 516.80,334.7 517.50,335.5 518.20,328.6 518.90,330.0 519.60,321.5 520.30,314.5 521.00,308.2 521.70,304.8 522.40,298.4 523.00,288.5 523.10,289.1 523.80,278.7 524.50,267.3 525.20,251.6 525.50,241.4 525.90,255.7 526.60,272.2 527.30,283.1 528.00,291.2 528.70,298.3 529.40,302.9 530.10,302.4 530.80,317.3 531.50,320.9 532.20,313.8 532.90,333.6 533.60,334.7 534.30,334.4 535.00,336.4 535.70,337.4 536.40,341.6 537.10,341.3 537.80,343.4 538.50,341.8 539.20,352.7 539.90,351.3 540.60,347.9 541.30,351.2 542.00,351.2 542.70,341.8 543.40,335.2 543.70,322.8 544.10,331.9 544.80,342.1 545.50,343.7 546.20,345.4 546.90,346.8 547.60,327.9 547.70,322.7 548.30,340.3 549.00,344.7 549.70,342.2 550.40,347.5 551.10,341.6 551.80,334.3 552.50,340.8 553.20,337.3 553.90,335.4 554.60,325.6 555.30,325.3 556.00,319.3 556.70,320.3 557.40,313.3 558.10,306.8 558.80,302.0 559.50,289.8 560.20,280.1 560.90,271.8 561.50,256.7 561.60,259.2 562.30,272.8 563.00,284.0 563.70,295.8 564.40,303.6 565.10,303.0 565.80,315.7 566.50,324.1 567.20,330.8 567.90,334.9 568.60,332.4 569.30,329.0 570.00,335.3 570.70,339.0 571.40,333.2 572.10,343.9 572.80,347.4 573.50,343.7 574.20,342.5 574.90,346.7 575.60,342.8 576.30,322.0 576.50,314.1 577.00,335.5 577.70,343.0 578.40,347.9 579.10,345.7 579.80,348.0 580.50,348.5 581.20,349.8 581.90,344.5 582.60,342.1 583.30,348.5 584.00,345.0 584.70,350.5 585.40,348.2 586.10,345.0 586.80,341.2 587.50,347.7 588.20,347.6 588.90,346.2 589.60,352.3 590.30,347.2 591.00,348.5 591.70,344.0 592.40,348.4 593.10,351.8 593.80,343.4 594.50,339.4 595.20,340.0 595.90,331.9 596.60,331.4 597.30,327.8 598.00,315.7 598.30,312.3 598.70,322.3 599.40,326.7 600.10,327.4 600.80,333.3 601.50,333.1 602.20,336.2 602.90,331.2 603.60,321.4 604.30,323.4 605.00,312.3 605.70,322.9 606.40,328.7 607.10,332.5 607.80,332.2 608.50,342.8 609.20,349.5 609.90,341.2 610.60,339.4 611.30,340.3 612.00,332.9 612.70,341.3 613.40,343.0 614.10,340.8 614.80,342.6 615.50,338.0 616.20,348.5 616.90,347.1 617.60,358.9 618.30,344.3 619.00,346.0 619.70,341.0 620.40,334.9 621.10,341.9 621.80,343.9 622.50,344.8 623.20,345.8 623.90,344.5 624.60,338.4 625.30,338.5 626.00,337.2 626.70,336.4 627.40,330.1 628.10,328.4 628.80,328.0 629.50,321.6 630.20,319.9 630.90,319.2 631.60,303.6 632.30,298.0 633.00,291.4 633.70,293.6 634.40,290.6 635.10,285.5 635.80,270.6 636.50,255.8 637.00,239.3 637.20,246.6 637.90,266.5 638.60,281.4 639.30,288.1 640.00,296.4 640.70,301.1 641.00,296.5 641.40,304.6 642.10,310.0 642.80,318.8 643.50,322.2 644.20,333.6 644.90,331.2 645.60,328.1 646.30,326.2 647.00,333.5 647.70,334.8 648.40,328.9 649.10,335.6 649.80,333.0 650.50,328.8 651.20,334.5 651.90,330.9 652.60,337.6 653.30,335.1 654.00,335.3 654.70,334.1 655.40,329.2 656.10,322.2 656.80,331.5 657.50,331.0 658.20,323.8 658.90,324.7 659.60,313.9 660.30,305.3 661.00,299.1 661.70,287.5 661.80,286.5 662.40,295.4 663.10,311.0 663.80,316.5 664.50,321.1 665.20,323.8 665.90,320.5 666.60,322.8 667.30,324.1 668.00,318.7 668.70,310.8 669.40,311.6 670.10,305.7 670.80,295.3 671.50,291.5 672.20,283.7 672.90,266.5 673.00,267.5 673.60,280.8 674.30,289.9 675.00,297.6 675.70,301.0 676.40,307.1 677.10,315.0 677.80,321.5 678.50,319.5 679.20,316.0 679.90,323.9 680.60,325.2 681.30,321.3 682.00,327.7 682.70,321.9 683.40,320.9 684.10,316.4 684.80,319.2 685.50,319.2 686.20,315.6 686.90,311.2 687.60,309.6 688.30,302.4 689.00,294.3 689.70,285.0 690.40,273.4 690.90,266.6 691.10,271.3 691.80,286.1 692.50,289.7 693.20,299.0 693.90,303.5 694.60,303.9 695.30,312.4 696.00,307.3 696.70,308.2 697.40,315.3 698.10,308.1 698.80,302.7 699.50,313.2 700.20,304.3 700.90,304.4 701.60,302.8 702.30,302.1 703.00,298.0 703.70,302.7 704.40,298.7 705.10,302.3 705.80,297.9 706.50,300.7 707.20,299.2 707.90,295.5 708.60,295.5 709.30,294.9 710.00,293.9 710.70,289.8 711.40,281.8 711.70,277.9 712.10,281.7 712.80,286.3 713.50,288.7 714.20,286.8 714.90,287.7 715.60,286.4 716.30,281.5 717.00,277.6 717.70,270.6 718.40,258.5 719.10,234.6 719.80,256.7 720.50,268.6 721.20,276.6 721.90,277.2 722.60,277.7 723.30,279.0 724.00,276.1 724.70,276.2 725.40,275.4 726.10,272.7 726.80,270.5 727.50,271.7 728.20,269.4 728.90,269.6 729.60,264.0 730.30,265.6 731.00,262.3 731.70,262.9 732.40,259.6 733.10,255.6 733.80,259.9 734.50,256.3 735.20,252.6 735.90,251.0 736.60,249.6 737.30,243.5 738.00,243.1 738.70,243.2 739.40,237.3 740.10,237.1 740.80,230.3 741.50,228.1 742.20,223.1 742.90,216.6 743.60,212.1 744.30,207.7 745.00,200.2 745.70,185.4 746.40,169.0 747.10,139.1 747.40,129.5 747.80,144.2 748.40,169.2 748.50,176.0 749.20,189.3 749.90,197.8 750.60,205.7 751.30,212.1 752.00,222.2 752.70,224.3 753.40,227.5 754.10,228.3 754.80,236.0 755.50,239.1 756.20,241.5 756.90,242.9 757.60,247.0 758.30,247.5 759.00,252.1 759.70,253.2 760.40,256.1 761.10,257.2 761.80,260.1 762.50,263.3 763.20,261.5 763.90,263.6 764.60,266.4 765.30,267.1 766.00,267.3 766.70,271.1 767.40,271.8 768.10,272.0 768.80,273.1 769.50,275.4 770.20,279.2 770.90,276.1 771.60,277.4 772.30,278.5 773.00,279.0 773.70,277.0 774.40,273.7 775.10,265.4 775.80,246.8 776.00,237.1 776.50,256.1 777.20,271.3 777.90,277.3 778.60,284.6 779.30,285.4 780.00,289.4 780.70,289.3 781.40,288.4 782.10,289.7 782.80,289.9 783.50,285.1 784.00,279.6 784.20,284.5 784.90,290.3 785.60,293.2 786.30,296.4 787.00,297.4 787.70,297.7 788.40,298.5 789.10,296.4 789.80,298.3 790.50,302.7 791.20,303.2 791.90,304.8 792.60,305.9 793.30,306.1 794.00,312.7 794.70,309.1 795.40,307.6 796.10,311.5 796.80,309.0 797.50,306.7 798.20,309.2 798.90,301.0 799.60,317.6 800.30,310.9 801.00,314.7 801.70,302.1 802.40,289.2 803.10,296.4 803.80,285.4 804.50,273.1 804.80,267.9 805.20,274.8 805.90,289.5 806.60,294.6 807.30,300.2 808.00,306.7 808.70,313.1 809.40,311.6 810.10,317.2 810.80,316.6 811.50,320.3 812.20,328.5 812.90,322.0 813.60,320.2 814.30,318.0 815.00,324.2 815.70,322.2 816.40,319.1 817.10,319.8 817.80,314.6 818.50,308.7 819.20,316.1 819.90,317.5 820.60,301.5 821.30,293.0 822.00,283.7 822.70,273.2 823.40,286.0 824.10,296.4 824.80,300.7 825.50,313.3 826.20,323.4 826.90,325.2 827.60,313.9 828.30,315.1 829.00,325.9 829.70,327.5 830.40,321.9 831.10,321.0 831.80,307.4 832.50,303.1 833.20,294.7 833.30,291.6 833.90,302.4 834.60,309.5 835.30,317.2 836.00,324.1 836.70,326.0 837.40,332.4 838.10,339.7 838.80,343.5 839.50,341.3 840.20,339.3 840.90,336.4 841.60,335.8 842.30,333.9 843.00,335.3 843.70,339.3 844.40,339.7 845.10,345.2 845.80,338.4 846.50,334.2 847.20,332.6 847.90,334.2 848.60,333.8 849.30,328.2 850.00,329.2 850.70,324.7 851.40,322.2 852.10,320.5 852.80,312.8 853.50,315.0 854.20,310.2 854.90,305.2 855.50,291.3 855.60,290.7 856.30,286.3 857.00,279.3 857.70,266.4 858.40,246.8 858.70,236.5 859.10,250.0 859.80,270.7 860.50,282.6 861.20,290.0 861.90,292.0 862.00,293.0 862.60,305.9 863.30,311.5 864.00,317.7 864.70,323.1 865.40,317.8 866.10,327.7 866.80,329.3 867.50,323.1 868.20,327.3 868.90,332.8 869.60,338.7 870.30,336.7 871.00,332.2 871.70,335.7 872.40,334.3 873.10,338.8 873.80,338.2 874.50,341.0 875.20,339.0 875.90,335.1 876.60,344.8 877.30,341.1 878.00,338.9 878.70,341.2 879.40,340.2 880.10,335.2 880.80,328.8 881.50,332.3 882.20,333.4 882.90,340.2 883.60,327.0 884.30,330.7 885.00,330.9 885.70,334.1 886.40,329.3 887.10,331.2 887.80,325.6 888.50,321.4 889.20,320.7 889.90,317.9 890.60,319.9 891.30,309.3 892.00,313.2 892.70,316.2 893.40,307.7 894.10,305.4 894.70,298.5 894.80,299.9 895.50,302.3 896.20,311.0 896.90,311.0 897.60,307.1 898.30,311.3 899.00,317.3 899.70,319.2 900.40,322.2 901.10,324.0 901.80,322.8 902.50,327.1 903.20,338.4 903.90,332.4 904.60,335.7 905.30,331.4 906.00,336.4 906.70,335.4 907.40,328.0 908.10,340.0 908.80,343.5 909.50,346.0 910.20,351.0 910.90,350.5 911.60,342.1 912.30,344.9 913.00,350.7 913.70,350.8 914.40,342.9 915.10,347.0 915.80,346.4 916.50,343.5 917.20,338.2 917.90,332.1 918.60,322.6 918.70,324.7 919.30,337.9 920.00,336.2 920.70,337.6 921.40,344.6 922.10,342.6 922.80,342.3 923.50,342.3 924.20,343.2 924.90,345.1 925.60,340.4 926.30,340.9 927.00,327.3 927.70,323.8 928.40,326.1 929.10,311.9 929.80,306.1 930.50,310.2 931.20,293.6 931.90,284.9 932.60,272.2 933.30,261.4 934.00,274.8 934.70,285.8 935.40,295.3 936.10,302.7 936.80,306.2 937.50,321.6 938.20,327.9 938.90,333.4 939.60,334.5 940.30,337.6 941.00,336.8 941.70,339.0 942.40,341.9 943.10,346.6 943.80,347.5 944.50,343.0 945.20,343.4 945.90,346.5 946.60,349.1 947.30,342.4 948.00,349.6 948.70,346.0 949.40,342.9 950.10,346.5 950.80,338.6 951.50,325.1 952.20,338.4 952.90,344.4 953.60,352.8 954.30,345.4 955.00,349.6 955.70,341.3 956.40,346.6 957.10,344.7 957.80,341.4 958.50,341.8 959.20,338.0 959.90,338.5 960.60,331.7 961.30,330.5 962.00,326.7 962.70,334.6 963.40,317.3 964.10,314.3 964.80,316.1 965.50,302.8 966.00,292.2 966.20,292.7 966.90,291.0 967.60,278.9 968.30,268.6 969.00,248.4 969.30,241.4 969.70,253.6 970.40,271.0 971.10,283.9 971.80,290.2 972.50,297.5 973.20,298.6 973.90,306.5 974.60,317.6 975.30,327.6 976.00,328.7 976.70,331.8 977.40,335.5 978.10,332.9 978.80,335.3 979.50,339.8 980.20,340.3 980.90,342.8 981.60,342.9 982.30,341.6 983.00,341.1 983.70,348.0 984.40,353.0 985.10,342.7 985.80,346.1 986.50,343.0 987.20,353.2 987.90,350.1 988.60,348.1 989.30,353.4 990.00,350.7 990.70,345.1 991.40,342.4 992.10,339.6 992.80,348.4 993.50,352.0 994.20,344.8 994.90,341.3 995.60,343.0 996.30,348.7 997.00,341.1 997.70,338.8 998.40,338.6 999.10,341.8 999.80,338.4 1000.50,334.7 1001.20,338.2 1001.90,342.7 1002.60,333.6 1003.30,329.7 1004.00,329.1 1004.70,323.6 1005.40,326.3 1006.10,322.6 1006.80,320.1 1007.50,313.3 1008.00,312.5 1008.20,313.3 1008.90,309.2 1009.60,313.0 1010.30,318.9 1011.00,322.9 1011.70,320.9 1012.40,329.9 1013.10,332.9 1013.80,338.7 1014.50,335.0 1015.20,332.0 1015.90,335.6 1016.60,337.7 1017.30,341.4 1018.00,341.4 1018.70,348.4 1019.40,340.7 1020.10,345.4 1020.80,349.6 1021.50,349.5 1022.20,350.1 1022.90,344.0 1023.60,342.3 1024.30,351.7 1025.00,344.9 1025.70,343.9 1026.40,349.7 1027.10,354.6 1027.80,352.8 1028.50,352.2"/><rect x="745.8" y="131.5" width="4.2" height="27" fill="#1a7a1a"/><line x1="746.5" y1="131.5" x2="746.5" y2="158" stroke="#30d030" stroke-width="1.3"/><line x1="749.3" y1="131.5" x2="749.3" y2="158" stroke="#30d030" stroke-width="1.3"/><rect x="741" y="157.5" width="12" height="307" fill="#0404a8" style="mix-blend-mode:screen"/><line x1="747.1" y1="157.5" x2="747.1" y2="464.5" stroke="#c87058" stroke-width="2.2"/></svg>
<div style="position:absolute;left:-11.199999999999989px;width:400px;top:135.53px;font-size:12.5px;line-height:12.5px;color:#e0e020;white-space:nowrap;text-align:center;transform:scaleX(0.8631);transform-origin:center top;-webkit-text-stroke:0.5px #e0e020">7,030</div>
<div style="position:absolute;left:131.5px;width:400px;top:135.53px;font-size:12.5px;line-height:12.5px;color:#e0e020;white-space:nowrap;text-align:center;transform:scaleX(0.8631);transform-origin:center top;-webkit-text-stroke:0.5px #e0e020">7,035</div>
<div style="position:absolute;left:274.2px;width:400px;top:135.53px;font-size:12.5px;line-height:12.5px;color:#e0e020;white-space:nowrap;text-align:center;transform:scaleX(0.8631);transform-origin:center top;-webkit-text-stroke:0.5px #e0e020">7,040</div>
<div style="position:absolute;left:416.89999999999986px;width:400px;top:135.53px;font-size:12.5px;line-height:12.5px;color:#e0e020;white-space:nowrap;text-align:center;transform:scaleX(0.8631);transform-origin:center top;-webkit-text-stroke:0.5px #e0e020">7,045</div>
<div style="position:absolute;left:559.5999999999999px;width:400px;top:135.53px;font-size:12.5px;line-height:12.5px;color:#e0e020;white-space:nowrap;text-align:center;transform:scaleX(0.8631);transform-origin:center top;-webkit-text-stroke:0.5px #e0e020">7,050</div>
<div style="position:absolute;left:702.3px;width:400px;top:135.53px;font-size:12.5px;line-height:12.5px;color:#e0e020;white-space:nowrap;text-align:center;transform:scaleX(0.8631);transform-origin:center top;-webkit-text-stroke:0.5px #e0e020">7,055</div>
<div style="position:absolute;right:1051.5px;top:151.43px;font-size:12.5px;line-height:12.5px;color:#e0e020;white-space:nowrap;text-align:right;transform:scaleX(0.9127);transform-origin:right top;-webkit-text-stroke:0.5px #e0e020">-30</div>
<div style="position:absolute;right:1051.5px;top:177.33px;font-size:12.5px;line-height:12.5px;color:#e0e020;white-space:nowrap;text-align:right;transform:scaleX(0.9127);transform-origin:right top;-webkit-text-stroke:0.5px #e0e020">-40</div>
<div style="position:absolute;right:1051.5px;top:203.23px;font-size:12.5px;line-height:12.5px;color:#e0e020;white-space:nowrap;text-align:right;transform:scaleX(0.9127);transform-origin:right top;-webkit-text-stroke:0.5px #e0e020">-50</div>
<div style="position:absolute;right:1051.5px;top:229.13px;font-size:12.5px;line-height:12.5px;color:#e0e020;white-space:nowrap;text-align:right;transform:scaleX(0.9127);transform-origin:right top;-webkit-text-stroke:0.5px #e0e020">-60</div>
<div style="position:absolute;right:1051.5px;top:255.03px;font-size:12.5px;line-height:12.5px;color:#e0e020;white-space:nowrap;text-align:right;transform:scaleX(0.9127);transform-origin:right top;-webkit-text-stroke:0.5px #e0e020">-70</div>
<div style="position:absolute;right:1051.5px;top:280.93px;font-size:12.5px;line-height:12.5px;color:#e0e020;white-space:nowrap;text-align:right;transform:scaleX(0.9127);transform-origin:right top;-webkit-text-stroke:0.5px #e0e020">-80</div>
<div style="position:absolute;right:1051.5px;top:306.83px;font-size:12.5px;line-height:12.5px;color:#e0e020;white-space:nowrap;text-align:right;transform:scaleX(0.9127);transform-origin:right top;-webkit-text-stroke:0.5px #e0e020">-90</div>
<div style="position:absolute;right:1051.5px;top:332.73px;font-size:12.5px;line-height:12.5px;color:#e0e020;white-space:nowrap;text-align:right;transform:scaleX(0.8589);transform-origin:right top;-webkit-text-stroke:0.5px #e0e020">-100</div>
<div style="position:absolute;right:1051.5px;top:358.63px;font-size:12.5px;line-height:12.5px;color:#e0e020;white-space:nowrap;text-align:right;transform:scaleX(0.8923);transform-origin:right top;-webkit-text-stroke:0.5px #e0e020">-110</div>
<div style="position:absolute;right:1051.5px;top:384.53px;font-size:12.5px;line-height:12.5px;color:#e0e020;white-space:nowrap;text-align:right;transform:scaleX(0.8589);transform-origin:right top;-webkit-text-stroke:0.5px #e0e020">-120</div>
<div style="position:absolute;right:1051.5px;top:410.43px;font-size:12.5px;line-height:12.5px;color:#e0e020;white-space:nowrap;text-align:right;transform:scaleX(0.8589);transform-origin:right top;-webkit-text-stroke:0.5px #e0e020">-130</div>
<div style="position:absolute;right:1051.5px;top:436.33px;font-size:12.5px;line-height:12.5px;color:#e0e020;white-space:nowrap;text-align:right;transform:scaleX(0.8589);transform-origin:right top;-webkit-text-stroke:0.5px #e0e020">-140</div>
<div style="position:absolute;right:379.70000000000005px;top:469.03px;font-size:12.5px;line-height:12.5px;color:#d8d830;white-space:nowrap;text-align:right;transform:scaleX(0.8961);transform-origin:right top;-webkit-text-stroke:0.45px #d8d830">-9,7Hz</div>
<div style="position:absolute;right:294.70000000000005px;top:469.03px;font-size:12.5px;line-height:12.5px;color:#d8d830;white-space:nowrap;text-align:right;transform:scaleX(0.9630);transform-origin:right top;-webkit-text-stroke:0.45px #d8d830">5,6dBm</div>
<div style="position:absolute;right:183.70000000000005px;top:469.03px;font-size:12.5px;line-height:12.5px;color:#d8d830;white-space:nowrap;text-align:right;transform:scaleX(0.9141);transform-origin:right top;-webkit-text-stroke:0.45px #d8d830">7,049 840 MHz</div>
<div style="position:absolute;left:117.5px;top:493.27px;font-size:10.5px;line-height:10.5px;color:#222;white-space:nowrap;transform:scaleX(0.8330);transform-origin:left top;">Pan:</div>
<div style="position:absolute;left:158px;top:496px;width:427px;height:3px;box-sizing:border-box;border-top:1px solid #6a6a6a;border-bottom:1px solid #f6f6f6;background:#4a4a4a"></div>
<svg style="position:absolute;left:575px;top:489.7px" width="11" height="21" viewBox="0 0 11 21"><path d="M1 1 H8 V14.0 L4.5 18 L1 14.0 Z" fill="#d8d8d8" stroke="#f8f8f8" stroke-width="1"/><path d="M8.5 1 V14.0 L4.5 18.5" fill="none" stroke="#333" stroke-width="1.4"/></svg>
<div style="position:absolute;left:592px;top:489px;width:45px;height:18px;background:#cbcbcb;box-sizing:border-box;border-top:1px solid #f4f4f4;border-left:1px solid #f4f4f4;border-right:2px solid #111;border-bottom:2px solid #111;box-shadow:inset 1px 1px 0 #e2e2e2;display:flex;align-items:center;justify-content:center;font-size:10.5px;color:#1a1a1a;white-space:nowrap;line-height:10.5px"><span style="display:inline-block;transform:scaleX(0.88)">Center</span></div>
<div style="position:absolute;left:659.5px;top:493.77px;font-size:10.5px;line-height:10.5px;color:#222;white-space:nowrap;transform:scaleX(0.9239);transform-origin:left top;">Zoom:</div>
<div style="position:absolute;left:696px;top:496px;width:171px;height:3px;box-sizing:border-box;border-top:1px solid #6a6a6a;border-bottom:1px solid #f6f6f6;background:#4a4a4a"></div>
<svg style="position:absolute;left:752px;top:489.7px" width="11" height="21" viewBox="0 0 11 21"><path d="M1 1 H8 V14.0 L4.5 18 L1 14.0 Z" fill="#d8d8d8" stroke="#f8f8f8" stroke-width="1"/><path d="M8.5 1 V14.0 L4.5 18.5" fill="none" stroke="#333" stroke-width="1.4"/></svg>
<div style="position:absolute;left:881px;top:489px;width:37px;height:18px;background:#cbcbcb;box-sizing:border-box;border-top:1px solid #f4f4f4;border-left:1px solid #f4f4f4;border-right:2px solid #111;border-bottom:2px solid #111;box-shadow:inset 1px 1px 0 #e2e2e2;display:flex;align-items:center;justify-content:center;font-size:10.5px;color:#1a1a1a;white-space:nowrap;line-height:10.5px"><span style="display:inline-block;transform:scaleX(0.88)">0.5x</span></div>
<div style="position:absolute;left:926px;top:489px;width:29px;height:18px;background:#cbcbcb;box-sizing:border-box;border-top:1px solid #f4f4f4;border-left:1px solid #f4f4f4;border-right:2px solid #111;border-bottom:2px solid #111;box-shadow:inset 1px 1px 0 #e2e2e2;display:flex;align-items:center;justify-content:center;font-size:10.5px;color:#1a1a1a;white-space:nowrap;line-height:10.5px"><span style="display:inline-block;transform:scaleX(0.88)">1x</span></div>
<div style="position:absolute;left:962px;top:489px;width:30px;height:18px;background:#cbcbcb;box-sizing:border-box;border-top:1px solid #f4f4f4;border-left:1px solid #f4f4f4;border-right:2px solid #111;border-bottom:2px solid #111;box-shadow:inset 1px 1px 0 #e2e2e2;display:flex;align-items:center;justify-content:center;font-size:10.5px;color:#1a1a1a;white-space:nowrap;line-height:10.5px"><span style="display:inline-block;transform:scaleX(0.88)">2x</span></div>
<div style="position:absolute;left:1000px;top:489px;width:29px;height:18px;background:#cbcbcb;box-sizing:border-box;border-top:1px solid #f4f4f4;border-left:1px solid #f4f4f4;border-right:2px solid #111;border-bottom:2px solid #111;box-shadow:inset 1px 1px 0 #e2e2e2;display:flex;align-items:center;justify-content:center;font-size:10.5px;color:#1a1a1a;white-space:nowrap;line-height:10.5px"><span style="display:inline-block;transform:scaleX(0.88)">4x</span></div>
<div style="position:absolute;left:1044px;top:178px;width:148px;height:110px;box-sizing:border-box;border:1px solid #b4b4b4;box-shadow:inset 1px 1px 0 #f2f2f2, 1px 1px 0 #f2f2f2"></div>
<div style="position:absolute;left:1049px;top:176px;width:46.5px;height:4px;background:#d4d4d4"></div>
<div style="position:absolute;left:1051px;top:174.62px;font-size:10px;line-height:10px;color:#1a1a1a;white-space:nowrap;transform:scaleX(0.9105);transform-origin:left top;">Band - HF</div>
<div style="position:absolute;left:1052px;top:197px;width:44px;height:16px;background:#cbcbcb;box-sizing:border-box;border-top:1px solid #f4f4f4;border-left:1px solid #f4f4f4;border-right:2px solid #111;border-bottom:2px solid #111;box-shadow:inset 1px 1px 0 #e2e2e2;display:flex;align-items:center;justify-content:center;font-size:10.5px;color:#1a1a1a;white-space:nowrap;line-height:10.5px"><span style="display:inline-block;transform:scaleX(0.88)">160</span></div>
<div style="position:absolute;left:1096px;top:197px;width:44px;height:16px;background:#cbcbcb;box-sizing:border-box;border-top:1px solid #f4f4f4;border-left:1px solid #f4f4f4;border-right:2px solid #111;border-bottom:2px solid #111;box-shadow:inset 1px 1px 0 #e2e2e2;display:flex;align-items:center;justify-content:center;font-size:10.5px;color:#1a1a1a;white-space:nowrap;line-height:10.5px"><span style="display:inline-block;transform:scaleX(0.88)">80</span></div>
<div style="position:absolute;left:1140px;top:197px;width:44px;height:16px;background:#cbcbcb;box-sizing:border-box;border-top:1px solid #f4f4f4;border-left:1px solid #f4f4f4;border-right:2px solid #111;border-bottom:2px solid #111;box-shadow:inset 1px 1px 0 #e2e2e2;display:flex;align-items:center;justify-content:center;font-size:10.5px;color:#1a1a1a;white-space:nowrap;line-height:10.5px"><span style="display:inline-block;transform:scaleX(0.88)">60</span></div>
<div style="position:absolute;left:1052px;top:213px;width:44px;height:16px;background:#ffff00;border:1px solid #7a7a30;box-sizing:border-box;display:flex;align-items:center;justify-content:center;font-size:10.5px;color:#1a1a1a;white-space:nowrap;line-height:10.5px"><span style="display:inline-block;transform:scaleX(0.88)">40</span></div>
<div style="position:absolute;left:1096px;top:213px;width:44px;height:16px;background:#cbcbcb;box-sizing:border-box;border-top:1px solid #f4f4f4;border-left:1px solid #f4f4f4;border-right:2px solid #111;border-bottom:2px solid #111;box-shadow:inset 1px 1px 0 #e2e2e2;display:flex;align-items:center;justify-content:center;font-size:10.5px;color:#1a1a1a;white-space:nowrap;line-height:10.5px"><span style="display:inline-block;transform:scaleX(0.88)">30</span></div>
<div style="position:absolute;left:1140px;top:213px;width:44px;height:16px;background:#cbcbcb;box-sizing:border-box;border-top:1px solid #f4f4f4;border-left:1px solid #f4f4f4;border-right:2px solid #111;border-bottom:2px solid #111;box-shadow:inset 1px 1px 0 #e2e2e2;display:flex;align-items:center;justify-content:center;font-size:10.5px;color:#1a1a1a;white-space:nowrap;line-height:10.5px"><span style="display:inline-block;transform:scaleX(0.88)">20</span></div>
<div style="position:absolute;left:1052px;top:229px;width:44px;height:16px;background:#cbcbcb;box-sizing:border-box;border-top:1px solid #f4f4f4;border-left:1px solid #f4f4f4;border-right:2px solid #111;border-bottom:2px solid #111;box-shadow:inset 1px 1px 0 #e2e2e2;display:flex;align-items:center;justify-content:center;font-size:10.5px;color:#1a1a1a;white-space:nowrap;line-height:10.5px"><span style="display:inline-block;transform:scaleX(0.88)">17</span></div>
<div style="position:absolute;left:1096px;top:229px;width:44px;height:16px;background:#cbcbcb;box-sizing:border-box;border-top:1px solid #f4f4f4;border-left:1px solid #f4f4f4;border-right:2px solid #111;border-bottom:2px solid #111;box-shadow:inset 1px 1px 0 #e2e2e2;display:flex;align-items:center;justify-content:center;font-size:10.5px;color:#1a1a1a;white-space:nowrap;line-height:10.5px"><span style="display:inline-block;transform:scaleX(0.88)">15</span></div>
<div style="position:absolute;left:1140px;top:229px;width:44px;height:16px;background:#cbcbcb;box-sizing:border-box;border-top:1px solid #f4f4f4;border-left:1px solid #f4f4f4;border-right:2px solid #111;border-bottom:2px solid #111;box-shadow:inset 1px 1px 0 #e2e2e2;display:flex;align-items:center;justify-content:center;font-size:10.5px;color:#1a1a1a;white-space:nowrap;line-height:10.5px"><span style="display:inline-block;transform:scaleX(0.88)">12</span></div>
<div style="position:absolute;left:1052px;top:245px;width:44px;height:16px;background:#cbcbcb;box-sizing:border-box;border-top:1px solid #f4f4f4;border-left:1px solid #f4f4f4;border-right:2px solid #111;border-bottom:2px solid #111;box-shadow:inset 1px 1px 0 #e2e2e2;display:flex;align-items:center;justify-content:center;font-size:10.5px;color:#1a1a1a;white-space:nowrap;line-height:10.5px"><span style="display:inline-block;transform:scaleX(0.88)">10</span></div>
<div style="position:absolute;left:1096px;top:245px;width:44px;height:16px;background:#cbcbcb;box-sizing:border-box;border-top:1px solid #f4f4f4;border-left:1px solid #f4f4f4;border-right:2px solid #111;border-bottom:2px solid #111;box-shadow:inset 1px 1px 0 #e2e2e2;display:flex;align-items:center;justify-content:center;font-size:10.5px;color:#1a1a1a;white-space:nowrap;line-height:10.5px"><span style="display:inline-block;transform:scaleX(0.88)">6</span></div>
<div style="position:absolute;left:1140px;top:245px;width:44px;height:16px;background:#cbcbcb;box-sizing:border-box;border-top:1px solid #f4f4f4;border-left:1px solid #f4f4f4;border-right:2px solid #111;border-bottom:2px solid #111;box-shadow:inset 1px 1px 0 #e2e2e2;display:flex;align-items:center;justify-content:center;font-size:10.5px;color:#1a1a1a;white-space:nowrap;line-height:10.5px"><span style="display:inline-block;transform:scaleX(0.88)">2</span></div>
<div style="position:absolute;left:1052px;top:261px;width:44px;height:16px;background:#cbcbcb;box-sizing:border-box;border-top:1px solid #f4f4f4;border-left:1px solid #f4f4f4;border-right:2px solid #111;border-bottom:2px solid #111;box-shadow:inset 1px 1px 0 #e2e2e2;display:flex;align-items:center;justify-content:center;font-size:10.5px;color:#1a1a1a;white-space:nowrap;line-height:10.5px"><span style="display:inline-block;transform:scaleX(0.88)">VHF+</span></div>
<div style="position:absolute;left:1096px;top:261px;width:44px;height:16px;background:#cbcbcb;box-sizing:border-box;border-top:1px solid #f4f4f4;border-left:1px solid #f4f4f4;border-right:2px solid #111;border-bottom:2px solid #111;box-shadow:inset 1px 1px 0 #e2e2e2;display:flex;align-items:center;justify-content:center;font-size:10.5px;color:#1a1a1a;white-space:nowrap;line-height:10.5px"><span style="display:inline-block;transform:scaleX(0.88)">WWV</span></div>
<div style="position:absolute;left:1140px;top:261px;width:44px;height:16px;background:#cbcbcb;box-sizing:border-box;border-top:1px solid #f4f4f4;border-left:1px solid #f4f4f4;border-right:2px solid #111;border-bottom:2px solid #111;box-shadow:inset 1px 1px 0 #e2e2e2;display:flex;align-items:center;justify-content:center;font-size:10.5px;color:#1a1a1a;white-space:nowrap;line-height:10.5px"><span style="display:inline-block;transform:scaleX(0.88)">GEN</span></div>
<div style="position:absolute;left:1044px;top:331px;width:148px;height:88px;box-sizing:border-box;border:1px solid #b4b4b4;box-shadow:inset 1px 1px 0 #f2f2f2, 1px 1px 0 #f2f2f2"></div>
<div style="position:absolute;left:1048.5px;top:329px;width:53px;height:4px;background:#d4d4d4"></div>
<div style="position:absolute;left:1050.5px;top:327.62px;font-size:10px;line-height:10px;color:#1a1a1a;white-space:nowrap;transform:scaleX(0.9089);transform-origin:left top;">Mode - LSB</div>
<div style="position:absolute;left:1051px;top:348.5px;width:45px;height:16.0px;background:#ffff00;border:1px solid #7a7a30;box-sizing:border-box;display:flex;align-items:center;justify-content:center;font-size:10.5px;color:#1a1a1a;white-space:nowrap;line-height:10.5px"><span style="display:inline-block;transform:scaleX(0.88)">LSB</span></div>
<div style="position:absolute;left:1096px;top:348.5px;width:44px;height:16.0px;background:#cbcbcb;box-sizing:border-box;border-top:1px solid #f4f4f4;border-left:1px solid #f4f4f4;border-right:2px solid #111;border-bottom:2px solid #111;box-shadow:inset 1px 1px 0 #e2e2e2;display:flex;align-items:center;justify-content:center;font-size:10.5px;color:#1a1a1a;white-space:nowrap;line-height:10.5px"><span style="display:inline-block;transform:scaleX(0.88)">USB</span></div>
<div style="position:absolute;left:1140px;top:348.5px;width:44px;height:16.0px;background:#cbcbcb;box-sizing:border-box;border-top:1px solid #f4f4f4;border-left:1px solid #f4f4f4;border-right:2px solid #111;border-bottom:2px solid #111;box-shadow:inset 1px 1px 0 #e2e2e2;display:flex;align-items:center;justify-content:center;font-size:10.5px;color:#1a1a1a;white-space:nowrap;line-height:10.5px"><span style="display:inline-block;transform:scaleX(0.88)">DSB</span></div>
<div style="position:absolute;left:1051px;top:364.5px;width:45px;height:16.0px;background:#cbcbcb;box-sizing:border-box;border-top:1px solid #f4f4f4;border-left:1px solid #f4f4f4;border-right:2px solid #111;border-bottom:2px solid #111;box-shadow:inset 1px 1px 0 #e2e2e2;display:flex;align-items:center;justify-content:center;font-size:10.5px;color:#1a1a1a;white-space:nowrap;line-height:10.5px"><span style="display:inline-block;transform:scaleX(0.88)">CWL</span></div>
<div style="position:absolute;left:1096px;top:364.5px;width:44px;height:16.0px;background:#cbcbcb;box-sizing:border-box;border-top:1px solid #f4f4f4;border-left:1px solid #f4f4f4;border-right:2px solid #111;border-bottom:2px solid #111;box-shadow:inset 1px 1px 0 #e2e2e2;display:flex;align-items:center;justify-content:center;font-size:10.5px;color:#1a1a1a;white-space:nowrap;line-height:10.5px"><span style="display:inline-block;transform:scaleX(0.88)">CWU</span></div>
<div style="position:absolute;left:1140px;top:364.5px;width:44px;height:16.0px;background:#cbcbcb;box-sizing:border-box;border-top:1px solid #f4f4f4;border-left:1px solid #f4f4f4;border-right:2px solid #111;border-bottom:2px solid #111;box-shadow:inset 1px 1px 0 #e2e2e2;display:flex;align-items:center;justify-content:center;font-size:10.5px;color:#1a1a1a;white-space:nowrap;line-height:10.5px"><span style="display:inline-block;transform:scaleX(0.88)">FMN</span></div>
<div style="position:absolute;left:1051px;top:380.5px;width:45px;height:16.0px;background:#cbcbcb;box-sizing:border-box;border-top:1px solid #f4f4f4;border-left:1px solid #f4f4f4;border-right:2px solid #111;border-bottom:2px solid #111;box-shadow:inset 1px 1px 0 #e2e2e2;display:flex;align-items:center;justify-content:center;font-size:10.5px;color:#1a1a1a;white-space:nowrap;line-height:10.5px"><span style="display:inline-block;transform:scaleX(0.88)">AM</span></div>
<div style="position:absolute;left:1096px;top:380.5px;width:44px;height:16.0px;background:#cbcbcb;box-sizing:border-box;border-top:1px solid #f4f4f4;border-left:1px solid #f4f4f4;border-right:2px solid #111;border-bottom:2px solid #111;box-shadow:inset 1px 1px 0 #e2e2e2;display:flex;align-items:center;justify-content:center;font-size:10.5px;color:#1a1a1a;white-space:nowrap;line-height:10.5px"><span style="display:inline-block;transform:scaleX(0.88)">SAM</span></div>
<div style="position:absolute;left:1140px;top:380.5px;width:44px;height:16.0px;background:#cbcbcb;box-sizing:border-box;border-top:1px solid #f4f4f4;border-left:1px solid #f4f4f4;border-right:2px solid #111;border-bottom:2px solid #111;box-shadow:inset 1px 1px 0 #e2e2e2;display:flex;align-items:center;justify-content:center;font-size:10.5px;color:#1a1a1a;white-space:nowrap;line-height:10.5px"><span style="display:inline-block;transform:scaleX(0.88)">SPEC</span></div>
<div style="position:absolute;left:1051px;top:396.5px;width:45px;height:16.0px;background:#cbcbcb;box-sizing:border-box;border-top:1px solid #f4f4f4;border-left:1px solid #f4f4f4;border-right:2px solid #111;border-bottom:2px solid #111;box-shadow:inset 1px 1px 0 #e2e2e2;display:flex;align-items:center;justify-content:center;font-size:10.5px;color:#1a1a1a;white-space:nowrap;line-height:10.5px"><span style="display:inline-block;transform:scaleX(0.88)">DIGL</span></div>
<div style="position:absolute;left:1096px;top:396.5px;width:44px;height:16.0px;background:#cbcbcb;box-sizing:border-box;border-top:1px solid #f4f4f4;border-left:1px solid #f4f4f4;border-right:2px solid #111;border-bottom:2px solid #111;box-shadow:inset 1px 1px 0 #e2e2e2;display:flex;align-items:center;justify-content:center;font-size:10.5px;color:#1a1a1a;white-space:nowrap;line-height:10.5px"><span style="display:inline-block;transform:scaleX(0.88)">DIGU</span></div>
<div style="position:absolute;left:1140px;top:396.5px;width:44px;height:16.0px;background:#cbcbcb;box-sizing:border-box;border-top:1px solid #f4f4f4;border-left:1px solid #f4f4f4;border-right:2px solid #111;border-bottom:2px solid #111;box-shadow:inset 1px 1px 0 #e2e2e2;display:flex;align-items:center;justify-content:center;font-size:10.5px;color:#1a1a1a;white-space:nowrap;line-height:10.5px"><span style="display:inline-block;transform:scaleX(0.88)">DRM</span></div>
<div style="position:absolute;left:1044px;top:493px;width:148px;height:164px;box-sizing:border-box;border:1px solid #b4b4b4;box-shadow:inset 1px 1px 0 #f2f2f2, 1px 1px 0 #f2f2f2"></div>
<div style="position:absolute;left:1048.5px;top:491px;width:54.5px;height:4px;background:#d4d4d4"></div>
<div style="position:absolute;left:1050.5px;top:489.62px;font-size:10px;line-height:10px;color:#1a1a1a;white-space:nowrap;transform:scaleX(0.9119);transform-origin:left top;">Filter - Var 1</div>
<div style="position:absolute;left:1052px;top:502px;width:44px;height:16px;background:#cbcbcb;box-sizing:border-box;border-top:1px solid #f4f4f4;border-left:1px solid #f4f4f4;border-right:2px solid #111;border-bottom:2px solid #111;box-shadow:inset 1px 1px 0 #e2e2e2;display:flex;align-items:center;justify-content:center;font-size:10.5px;color:#1a1a1a;white-space:nowrap;line-height:10.5px"><span style="display:inline-block;transform:scaleX(0.88)">5.0k</span></div>
<div style="position:absolute;left:1096px;top:502px;width:44px;height:16px;background:#cbcbcb;box-sizing:border-box;border-top:1px solid #f4f4f4;border-left:1px solid #f4f4f4;border-right:2px solid #111;border-bottom:2px solid #111;box-shadow:inset 1px 1px 0 #e2e2e2;display:flex;align-items:center;justify-content:center;font-size:10.5px;color:#1a1a1a;white-space:nowrap;line-height:10.5px"><span style="display:inline-block;transform:scaleX(0.88)">4.0k</span></div>
<div style="position:absolute;left:1140px;top:502px;width:44px;height:16px;background:#cbcbcb;box-sizing:border-box;border-top:1px solid #f4f4f4;border-left:1px solid #f4f4f4;border-right:2px solid #111;border-bottom:2px solid #111;box-shadow:inset 1px 1px 0 #e2e2e2;display:flex;align-items:center;justify-content:center;font-size:10.5px;color:#1a1a1a;white-space:nowrap;line-height:10.5px"><span style="display:inline-block;transform:scaleX(0.88)">3.5k</span></div>
<div style="position:absolute;left:1052px;top:518px;width:44px;height:16px;background:#cbcbcb;box-sizing:border-box;border-top:1px solid #f4f4f4;border-left:1px solid #f4f4f4;border-right:2px solid #111;border-bottom:2px solid #111;box-shadow:inset 1px 1px 0 #e2e2e2;display:flex;align-items:center;justify-content:center;font-size:10.5px;color:#1a1a1a;white-space:nowrap;line-height:10.5px"><span style="display:inline-block;transform:scaleX(0.88)">3.2k</span></div>
<div style="position:absolute;left:1096px;top:518px;width:44px;height:16px;background:#cbcbcb;box-sizing:border-box;border-top:1px solid #f4f4f4;border-left:1px solid #f4f4f4;border-right:2px solid #111;border-bottom:2px solid #111;box-shadow:inset 1px 1px 0 #e2e2e2;display:flex;align-items:center;justify-content:center;font-size:10.5px;color:#1a1a1a;white-space:nowrap;line-height:10.5px"><span style="display:inline-block;transform:scaleX(0.88)">3.0k</span></div>
<div style="position:absolute;left:1140px;top:518px;width:44px;height:16px;background:#cbcbcb;box-sizing:border-box;border-top:1px solid #f4f4f4;border-left:1px solid #f4f4f4;border-right:2px solid #111;border-bottom:2px solid #111;box-shadow:inset 1px 1px 0 #e2e2e2;display:flex;align-items:center;justify-content:center;font-size:10.5px;color:#1a1a1a;white-space:nowrap;line-height:10.5px"><span style="display:inline-block;transform:scaleX(0.88)">2.8k</span></div>
<div style="position:absolute;left:1052px;top:534px;width:44px;height:16px;background:#cbcbcb;box-sizing:border-box;border-top:1px solid #f4f4f4;border-left:1px solid #f4f4f4;border-right:2px solid #111;border-bottom:2px solid #111;box-shadow:inset 1px 1px 0 #e2e2e2;display:flex;align-items:center;justify-content:center;font-size:10.5px;color:#1a1a1a;white-space:nowrap;line-height:10.5px"><span style="display:inline-block;transform:scaleX(0.88)">2.6k</span></div>
<div style="position:absolute;left:1096px;top:534px;width:44px;height:16px;background:#cbcbcb;box-sizing:border-box;border-top:1px solid #f4f4f4;border-left:1px solid #f4f4f4;border-right:2px solid #111;border-bottom:2px solid #111;box-shadow:inset 1px 1px 0 #e2e2e2;display:flex;align-items:center;justify-content:center;font-size:10.5px;color:#1a1a1a;white-space:nowrap;line-height:10.5px"><span style="display:inline-block;transform:scaleX(0.88)">2.4k</span></div>
<div style="position:absolute;left:1140px;top:534px;width:44px;height:16px;background:#cbcbcb;box-sizing:border-box;border-top:1px solid #f4f4f4;border-left:1px solid #f4f4f4;border-right:2px solid #111;border-bottom:2px solid #111;box-shadow:inset 1px 1px 0 #e2e2e2;display:flex;align-items:center;justify-content:center;font-size:10.5px;color:#1a1a1a;white-space:nowrap;line-height:10.5px"><span style="display:inline-block;transform:scaleX(0.88)">2.0k</span></div>
<div style="position:absolute;left:1052px;top:550px;width:44px;height:16px;background:#cbcbcb;box-sizing:border-box;border-top:1px solid #f4f4f4;border-left:1px solid #f4f4f4;border-right:2px solid #111;border-bottom:2px solid #111;box-shadow:inset 1px 1px 0 #e2e2e2;display:flex;align-items:center;justify-content:center;font-size:10.5px;color:#1a1a1a;white-space:nowrap;line-height:10.5px"><span style="display:inline-block;transform:scaleX(0.88)">1.8k</span></div>
<div style="position:absolute;left:1096px;top:550px;width:44px;height:16px;background:#ffff00;border:1px solid #7a7a30;box-sizing:border-box;display:flex;align-items:center;justify-content:center;font-size:10.5px;color:#1a1a1a;white-space:nowrap;line-height:10.5px"><span style="display:inline-block;transform:scaleX(0.88)">Var 1</span></div>
<div style="position:absolute;left:1140px;top:550px;width:44px;height:16px;background:#cbcbcb;box-sizing:border-box;border-top:1px solid #f4f4f4;border-left:1px solid #f4f4f4;border-right:2px solid #111;border-bottom:2px solid #111;box-shadow:inset 1px 1px 0 #e2e2e2;display:flex;align-items:center;justify-content:center;font-size:10.5px;color:#1a1a1a;white-space:nowrap;line-height:10.5px"><span style="display:inline-block;transform:scaleX(0.88)">Var 2</span></div>
<div style="position:absolute;left:1049.5px;top:575.27px;font-size:10.5px;line-height:10.5px;color:#222;white-space:nowrap;transform:scaleX(0.9084);transform-origin:left top;">Low</div>
<div style="position:absolute;left:1073px;top:574px;width:43px;height:14px;box-sizing:border-box;background:#ffff00;border-top:2px solid #555;border-left:2px solid #555;border-right:1px solid #f4f4f4;border-bottom:1px solid #f4f4f4;font-size:10.5px;line-height:11px;color:#111;text-align:left;padding-left:0px;white-space:nowrap;overflow:hidden"><span style="display:inline-block;transform:scaleX(0.87);transform-origin:left center">-200</span></div>
<div style="position:absolute;left:1103px;top:576px;width:12px;height:11px;background:#e2e2e2;box-sizing:border-box;border-right:2px solid #3a3a3a;border-bottom:2px solid #3a3a3a;border-left:1px solid #f0f0f0"></div>
<div style="position:absolute;left:1104px;top:580.8px;width:10px;height:1.2px;background:#505050"></div>
<div style="position:absolute;left:1107.5px;top:577.4px;width:2px;height:1.5px;background:#222"></div>
<div style="position:absolute;left:1107.5px;top:582.9px;width:2px;height:1.5px;background:#222"></div>
<div style="position:absolute;left:1117.5px;top:575.27px;font-size:10.5px;line-height:10.5px;color:#222;white-space:nowrap;transform:scaleX(0.9255);transform-origin:left top;">High</div>
<div style="position:absolute;left:1142px;top:574px;width:43px;height:14px;box-sizing:border-box;background:#ffff00;border-top:2px solid #555;border-left:2px solid #555;border-right:1px solid #f4f4f4;border-bottom:1px solid #f4f4f4;font-size:10.5px;line-height:11px;color:#111;text-align:left;padding-left:0px;white-space:nowrap;overflow:hidden"><span style="display:inline-block;transform:scaleX(0.87);transform-origin:left center">200</span></div>
<div style="position:absolute;left:1172px;top:576px;width:12px;height:11px;background:#e2e2e2;box-sizing:border-box;border-right:2px solid #3a3a3a;border-bottom:2px solid #3a3a3a;border-left:1px solid #f0f0f0"></div>
<div style="position:absolute;left:1173px;top:580.8px;width:10px;height:1.2px;background:#505050"></div>
<div style="position:absolute;left:1176.5px;top:577.4px;width:2px;height:1.5px;background:#222"></div>
<div style="position:absolute;left:1176.5px;top:582.9px;width:2px;height:1.5px;background:#222"></div>
<div style="position:absolute;left:1052px;top:602.27px;font-size:10.5px;line-height:10.5px;color:#222;white-space:nowrap;transform:scaleX(0.9239);transform-origin:left top;">Width:</div>
<div style="position:absolute;left:1089px;top:610px;width:88px;height:3px;box-sizing:border-box;border-top:1px solid #6a6a6a;border-bottom:1px solid #f6f6f6;background:#4a4a4a"></div>
<svg style="position:absolute;left:1089px;top:603.0px" width="12" height="23" viewBox="0 0 12 23"><path d="M1 1 H9 V15.5 L5.0 20 L1 15.5 Z" fill="#d8d8d8" stroke="#f8f8f8" stroke-width="1"/><path d="M9.5 1 V15.5 L5.0 20.5" fill="none" stroke="#333" stroke-width="1.4"/></svg>
<div style="position:absolute;left:1052px;top:630.27px;font-size:10.5px;line-height:10.5px;color:#222;white-space:nowrap;transform:scaleX(0.9191);transform-origin:left top;">Shift:</div>
<div style="position:absolute;left:1088px;top:638px;width:60px;height:3px;box-sizing:border-box;border-top:1px solid #6a6a6a;border-bottom:1px solid #f6f6f6;background:#4a4a4a"></div>
<svg style="position:absolute;left:1113px;top:631.7px" width="12" height="21" viewBox="0 0 12 21"><path d="M1 1 H9 V13.5 L5.0 18 L1 13.5 Z" fill="#d8d8d8" stroke="#f8f8f8" stroke-width="1"/><path d="M9.5 1 V13.5 L5.0 18.5" fill="none" stroke="#333" stroke-width="1.4"/></svg>
<div style="position:absolute;left:1155px;top:631px;width:30px;height:17px;background:#cbcbcb;box-sizing:border-box;border-top:1px solid #f4f4f4;border-left:1px solid #f4f4f4;border-right:2px solid #111;border-bottom:2px solid #111;box-shadow:inset 1px 1px 0 #e2e2e2;display:flex;align-items:center;justify-content:center;font-size:10.5px;color:#1a1a1a;white-space:nowrap;line-height:10.5px"><span style="display:inline-block;transform:scaleX(0.88)">Res</span></div>
<div style="position:absolute;left:177px;top:520px;width:127px;height:138px;box-sizing:border-box;border:1px solid #b4b4b4;box-shadow:inset 1px 1px 0 #f2f2f2, 1px 1px 0 #f2f2f2"></div>
<div style="position:absolute;left:183px;top:518px;width:25.5px;height:4px;background:#d4d4d4"></div>
<div style="position:absolute;left:185px;top:516.62px;font-size:10px;line-height:10px;color:#1a1a1a;white-space:nowrap;transform:scaleX(0.9970);transform-origin:left top;">VFO</div>
<div style="position:absolute;left:192px;top:537.5px;width:46px;height:16.0px;background:#cbcbcb;box-sizing:border-box;border-top:1px solid #f4f4f4;border-left:1px solid #f4f4f4;border-right:2px solid #111;border-bottom:2px solid #111;box-shadow:inset 1px 1px 0 #e2e2e2;display:flex;align-items:center;justify-content:center;font-size:10.5px;color:#1a1a1a;white-space:nowrap;line-height:10.5px"><span style="display:inline-block;transform:scaleX(0.88)">SPLT</span></div>
<div style="position:absolute;left:244.5px;top:537.5px;width:44.5px;height:16.0px;background:#cbcbcb;box-sizing:border-box;border-top:1px solid #f4f4f4;border-left:1px solid #f4f4f4;border-right:2px solid #111;border-bottom:2px solid #111;box-shadow:inset 1px 1px 0 #e2e2e2;display:flex;align-items:center;justify-content:center;font-size:10.5px;color:#1a1a1a;white-space:nowrap;line-height:10.5px"><span style="display:inline-block;transform:scaleX(0.88)">A &gt; B</span></div>
<div style="position:absolute;left:192px;top:553.5px;width:46px;height:16.0px;background:#cbcbcb;box-sizing:border-box;border-top:1px solid #f4f4f4;border-left:1px solid #f4f4f4;border-right:2px solid #111;border-bottom:2px solid #111;box-shadow:inset 1px 1px 0 #e2e2e2;display:flex;align-items:center;justify-content:center;font-size:10.5px;color:#1a1a1a;white-space:nowrap;line-height:10.5px"><span style="display:inline-block;transform:scaleX(0.88)">0 Beat</span></div>
<div style="position:absolute;left:244.5px;top:553.5px;width:44.5px;height:16.0px;background:#cbcbcb;box-sizing:border-box;border-top:1px solid #f4f4f4;border-left:1px solid #f4f4f4;border-right:2px solid #111;border-bottom:2px solid #111;box-shadow:inset 1px 1px 0 #e2e2e2;display:flex;align-items:center;justify-content:center;font-size:10.5px;color:#1a1a1a;white-space:nowrap;line-height:10.5px"><span style="display:inline-block;transform:scaleX(0.88)">A &lt; B</span></div>
<div style="position:absolute;left:192px;top:569.5px;width:46px;height:16.0px;background:#cbcbcb;box-sizing:border-box;border-top:1px solid #f4f4f4;border-left:1px solid #f4f4f4;border-right:2px solid #111;border-bottom:2px solid #111;box-shadow:inset 1px 1px 0 #e2e2e2;display:flex;align-items:center;justify-content:center;font-size:10.5px;color:#1a1a1a;white-space:nowrap;line-height:10.5px"><span style="display:inline-block;transform:scaleX(0.88)">IF-&gt;V</span></div>
<div style="position:absolute;left:244.5px;top:569.5px;width:44.5px;height:16.0px;background:#cbcbcb;box-sizing:border-box;border-top:1px solid #f4f4f4;border-left:1px solid #f4f4f4;border-right:2px solid #111;border-bottom:2px solid #111;box-shadow:inset 1px 1px 0 #e2e2e2;display:flex;align-items:center;justify-content:center;font-size:10.5px;color:#1a1a1a;white-space:nowrap;line-height:10.5px"><span style="display:inline-block;transform:scaleX(0.88)">A &lt;&gt; B</span></div>
<div style="position:absolute;left:192px;top:600px;width:31px;height:15px;background:#cbcbcb;box-sizing:border-box;border-top:1px solid #f4f4f4;border-left:1px solid #f4f4f4;border-right:2px solid #111;border-bottom:2px solid #111;box-shadow:inset 1px 1px 0 #e2e2e2;display:flex;align-items:center;justify-content:center;font-size:10.5px;color:#1a1a1a;white-space:nowrap;line-height:10.5px"><span style="display:inline-block;transform:scaleX(0.88)">XIT</span></div>
<div style="position:absolute;left:223px;top:600px;width:15px;height:15px;background:#cbcbcb;box-sizing:border-box;border-top:1px solid #f4f4f4;border-left:1px solid #f4f4f4;border-right:2px solid #111;border-bottom:2px solid #111;box-shadow:inset 1px 1px 0 #e2e2e2;display:flex;align-items:center;justify-content:center;font-size:10.5px;color:#1a1a1a;white-space:nowrap;line-height:10.5px"><span style="display:inline-block;transform:scaleX(0.88)">0</span></div>
<div style="position:absolute;left:245px;top:600px;width:28px;height:15px;background:#cbcbcb;box-sizing:border-box;border-top:1px solid #f4f4f4;border-left:1px solid #f4f4f4;border-right:2px solid #111;border-bottom:2px solid #111;box-shadow:inset 1px 1px 0 #e2e2e2;display:flex;align-items:center;justify-content:center;font-size:10.5px;color:#1a1a1a;white-space:nowrap;line-height:10.5px"><span style="display:inline-block;transform:scaleX(0.88)">RIT</span></div>
<div style="position:absolute;left:273px;top:600px;width:16px;height:15px;background:#cbcbcb;box-sizing:border-box;border-top:1px solid #f4f4f4;border-left:1px solid #f4f4f4;border-right:2px solid #111;border-bottom:2px solid #111;box-shadow:inset 1px 1px 0 #e2e2e2;display:flex;align-items:center;justify-content:center;font-size:10.5px;color:#1a1a1a;white-space:nowrap;line-height:10.5px"><span style="display:inline-block;transform:scaleX(0.88)">0</span></div>
<div style="position:absolute;left:185px;top:616px;width:52px;height:15px;box-sizing:border-box;background:#fff;border-top:2px solid #555;border-left:2px solid #555;border-right:1px solid #f4f4f4;border-bottom:1px solid #f4f4f4;font-size:10.5px;line-height:12px;color:#111;text-align:left;padding-left:0px;white-space:nowrap;overflow:hidden"><span style="display:inline-block;transform:scaleX(0.87);transform-origin:left center">0</span></div>
<div style="position:absolute;left:224px;top:618px;width:12px;height:12px;background:#e2e2e2;box-sizing:border-box;border-right:2px solid #3a3a3a;border-bottom:2px solid #3a3a3a;border-left:1px solid #f0f0f0"></div>
<div style="position:absolute;left:225px;top:623.3px;width:10px;height:1.2px;background:#505050"></div>
<div style="position:absolute;left:228.5px;top:619.9px;width:2px;height:1.5px;background:#222"></div>
<div style="position:absolute;left:228.5px;top:625.4px;width:2px;height:1.5px;background:#222"></div>
<div style="position:absolute;left:244.5px;top:616px;width:51.5px;height:15px;box-sizing:border-box;background:#fff;border-top:2px solid #555;border-left:2px solid #555;border-right:1px solid #f4f4f4;border-bottom:1px solid #f4f4f4;font-size:10.5px;line-height:12px;color:#111;text-align:left;padding-left:0px;white-space:nowrap;overflow:hidden"><span style="display:inline-block;transform:scaleX(0.87);transform-origin:left center">0</span></div>
<div style="position:absolute;left:283px;top:618px;width:12px;height:12px;background:#e2e2e2;box-sizing:border-box;border-right:2px solid #3a3a3a;border-bottom:2px solid #3a3a3a;border-left:1px solid #f0f0f0"></div>
<div style="position:absolute;left:284px;top:623.3px;width:10px;height:1.2px;background:#505050"></div>
<div style="position:absolute;left:287.5px;top:619.9px;width:2px;height:1.5px;background:#222"></div>
<div style="position:absolute;left:287.5px;top:625.4px;width:2px;height:1.5px;background:#222"></div>
<div style="position:absolute;left:376px;top:520px;width:102px;height:73px;box-sizing:border-box;border:1px solid #b4b4b4;box-shadow:inset 1px 1px 0 #f2f2f2, 1px 1px 0 #f2f2f2"></div>
<div style="position:absolute;left:381px;top:518px;width:23px;height:4px;background:#d4d4d4"></div>
<div style="position:absolute;left:383px;top:516.62px;font-size:10px;line-height:10px;color:#1a1a1a;white-space:nowrap;transform:scaleX(0.8754);transform-origin:left top;">DSP</div>
<div style="position:absolute;left:383px;top:537.5px;width:44px;height:16.0px;background:#cbcbcb;box-sizing:border-box;border-top:1px solid #f4f4f4;border-left:1px solid #f4f4f4;border-right:2px solid #111;border-bottom:2px solid #111;box-shadow:inset 1px 1px 0 #e2e2e2;display:flex;align-items:center;justify-content:center;font-size:10.5px;color:#1a1a1a;white-space:nowrap;line-height:10.5px"><span style="display:inline-block;transform:scaleX(0.88)">NR</span></div>
<div style="position:absolute;left:427px;top:537.5px;width:44.5px;height:16.0px;background:#cbcbcb;box-sizing:border-box;border-top:1px solid #f4f4f4;border-left:1px solid #f4f4f4;border-right:2px solid #111;border-bottom:2px solid #111;box-shadow:inset 1px 1px 0 #e2e2e2;display:flex;align-items:center;justify-content:center;font-size:10.5px;color:#1a1a1a;white-space:nowrap;line-height:10.5px"><span style="display:inline-block;transform:scaleX(0.88)">ANF</span></div>
<div style="position:absolute;left:383px;top:553.5px;width:44px;height:16.0px;background:#cbcbcb;box-sizing:border-box;border-top:1px solid #f4f4f4;border-left:1px solid #f4f4f4;border-right:2px solid #111;border-bottom:2px solid #111;box-shadow:inset 1px 1px 0 #e2e2e2;display:flex;align-items:center;justify-content:center;font-size:10.5px;color:#1a1a1a;white-space:nowrap;line-height:10.5px"><span style="display:inline-block;transform:scaleX(0.88)">NB</span></div>
<div style="position:absolute;left:427px;top:553.5px;width:44.5px;height:16.0px;background:#cbcbcb;box-sizing:border-box;border-top:1px solid #f4f4f4;border-left:1px solid #f4f4f4;border-right:2px solid #111;border-bottom:2px solid #111;box-shadow:inset 1px 1px 0 #e2e2e2;display:flex;align-items:center;justify-content:center;font-size:10.5px;color:#1a1a1a;white-space:nowrap;line-height:10.5px"><span style="display:inline-block;transform:scaleX(0.88)">NB2</span></div>
<div style="position:absolute;left:383px;top:569.5px;width:44px;height:16.0px;background:#cbcbcb;box-sizing:border-box;border-top:1px solid #f4f4f4;border-left:1px solid #f4f4f4;border-right:2px solid #111;border-bottom:2px solid #111;box-shadow:inset 1px 1px 0 #e2e2e2;display:flex;align-items:center;justify-content:center;font-size:10.5px;color:#1a1a1a;white-space:nowrap;line-height:10.5px"><span style="display:inline-block;transform:scaleX(0.88)">SR</span></div>
<div style="position:absolute;left:427px;top:569.5px;width:44.5px;height:16.0px;background:#cbcbcb;box-sizing:border-box;border-top:1px solid #f4f4f4;border-left:1px solid #f4f4f4;border-right:2px solid #111;border-bottom:2px solid #111;box-shadow:inset 1px 1px 0 #e2e2e2;display:flex;align-items:center;justify-content:center;font-size:10.5px;color:#1a1a1a;white-space:nowrap;line-height:10.5px"><span style="display:inline-block;transform:scaleX(0.88)">BIN</span></div>
<div style="position:absolute;left:487px;top:520px;width:102px;height:73px;box-sizing:border-box;border:1px solid #b4b4b4;box-shadow:inset 1px 1px 0 #f2f2f2, 1px 1px 0 #f2f2f2"></div>
<div style="position:absolute;left:491.5px;top:518px;width:62px;height:4px;background:#d4d4d4"></div>
<div style="position:absolute;left:493.5px;top:516.62px;font-size:10px;line-height:10px;color:#1a1a1a;white-space:nowrap;transform:scaleX(0.9407);transform-origin:left top;">Display Mode</div>
<div style="position:absolute;left:494px;top:534.5px;width:87px;height:15.5px;box-sizing:border-box;background:#fff;border-top:2px solid #555;border-left:2px solid #555;border-right:1px solid #f4f4f4;border-bottom:1px solid #f4f4f4;font-size:10.5px;line-height:12.5px;color:#111;text-align:left;padding-left:2px;white-space:nowrap;overflow:hidden"><span style="display:inline-block;transform:scaleX(0.87);transform-origin:left center">Panadapter</span></div>
<div style="position:absolute;left:566px;top:536.5px;width:14px;height:12.5px;background:#dcdcdc;box-sizing:border-box;border-top:1px solid #f4f4f4;border-left:1px solid #f4f4f4;border-right:2px solid #222;border-bottom:2px solid #222"></div>
<div style="position:absolute;left:569px;top:540.2px;width:0;height:0;border-left:4px solid transparent;border-right:4px solid transparent;border-top:4px solid #000"></div>
<div style="position:absolute;left:494px;top:557px;width:32px;height:16px;background:#ffff00;border:1px solid #7a7a30;box-sizing:border-box;display:flex;align-items:center;justify-content:center;font-size:10.5px;color:#1a1a1a;white-space:nowrap;line-height:10.5px"><span style="display:inline-block;transform:scaleX(0.88)">AVG</span></div>
<div style="position:absolute;left:526px;top:557px;width:21px;height:16px;background:#cbcbcb;box-sizing:border-box;border-top:1px solid #f4f4f4;border-left:1px solid #f4f4f4;border-right:2px solid #111;border-bottom:2px solid #111;box-shadow:inset 1px 1px 0 #e2e2e2;display:flex;align-items:center;justify-content:center;font-size:10.5px;color:#1a1a1a;white-space:nowrap;line-height:10.5px"><span style="display:inline-block;transform:scaleX(0.88)">F</span></div>
<div style="position:absolute;left:548px;top:557px;width:34px;height:16px;background:#cbcbcb;box-sizing:border-box;border-top:1px solid #f4f4f4;border-left:1px solid #f4f4f4;border-right:2px solid #111;border-bottom:2px solid #111;box-shadow:inset 1px 1px 0 #e2e2e2;display:flex;align-items:center;justify-content:center;font-size:10.5px;color:#1a1a1a;white-space:nowrap;line-height:10.5px"><span style="display:inline-block;transform:scaleX(0.88)">Peak</span></div>
<div style="position:absolute;left:494px;top:573px;width:28px;height:15px;background:#cbcbcb;box-sizing:border-box;border-top:1px solid #f4f4f4;border-left:1px solid #f4f4f4;border-right:2px solid #111;border-bottom:2px solid #111;box-shadow:inset 1px 1px 0 #e2e2e2;display:flex;align-items:center;justify-content:center;font-size:10.5px;color:#1a1a1a;white-space:nowrap;line-height:10.5px"><span style="display:inline-block;transform:scaleX(0.88)">Snp</span></div>
<div style="position:absolute;left:522.5px;top:573px;width:25.5px;height:15px;background:#cbcbcb;box-sizing:border-box;border-top:1px solid #f4f4f4;border-left:1px solid #f4f4f4;border-right:2px solid #111;border-bottom:2px solid #111;box-shadow:inset 1px 1px 0 #e2e2e2;display:flex;align-items:center;justify-content:center;font-size:10.5px;color:#1a1a1a;white-space:nowrap;line-height:10.5px"><span style="display:inline-block;transform:scaleX(0.88)">Clr</span></div>
<div style="position:absolute;left:548.5px;top:573px;width:33.5px;height:15px;background:#cbcbcb;box-sizing:border-box;border-top:1px solid #f4f4f4;border-left:1px solid #f4f4f4;border-right:2px solid #111;border-bottom:2px solid #111;box-shadow:inset 1px 1px 0 #e2e2e2;display:flex;align-items:center;justify-content:center;font-size:10.5px;color:#1a1a1a;white-space:nowrap;line-height:10.5px"><span style="display:inline-block;transform:scaleX(0.88)">PS</span></div>
<div style="position:absolute;left:376px;top:599px;width:213px;height:58px;box-sizing:border-box;border:1px solid #b4b4b4;box-shadow:inset 1px 1px 0 #f2f2f2, 1px 1px 0 #f2f2f2"></div>
<div style="position:absolute;left:381px;top:597px;width:38px;height:4px;background:#d4d4d4"></div>
<div style="position:absolute;left:383px;top:595.62px;font-size:10px;line-height:10px;color:#1a1a1a;white-space:nowrap;transform:scaleX(0.9424);transform-origin:left top;">MultiRX</div>
<div style="position:absolute;left:394px;top:613px;width:3px;height:34px;box-sizing:border-box;border-left:1px solid #6a6a6a;border-right:1px solid #f6f6f6;background:#4a4a4a"></div>
<svg style="position:absolute;left:390px;top:615px" width="13" height="7"><path d="M1 1 H9 L12 3.2 L9 5.5 H1 Z" fill="#dadada" stroke="#f8f8f8" stroke-width="0.8"/><path d="M1 5.6 H9.2 L12 3.2" fill="none" stroke="#333" stroke-width="1.2"/></svg>
<div style="position:absolute;left:514px;top:613px;width:3px;height:34px;box-sizing:border-box;border-left:1px solid #6a6a6a;border-right:1px solid #f6f6f6;background:#4a4a4a"></div>
<svg style="position:absolute;left:510px;top:612px" width="13" height="7"><path d="M1 1 H9 L12 3.2 L9 5.5 H1 Z" fill="#dadada" stroke="#f8f8f8" stroke-width="0.8"/><path d="M1 5.6 H9.2 L12 3.2" fill="none" stroke="#333" stroke-width="1.2"/></svg>
<svg style="position:absolute;left:0;top:0" width="1200" height="666"><rect x="419.6" y="624.2" width="1.6" height="2" fill="#333"/><rect x="437.7" y="624.2" width="1.6" height="2" fill="#333"/><rect x="455.8" y="624.2" width="1.6" height="2" fill="#333"/><rect x="473.9" y="624.2" width="1.6" height="2" fill="#333"/><rect x="492.3" y="624.2" width="1.6" height="2" fill="#333"/><rect x="419.6" y="645.4" width="1.6" height="2" fill="#333"/><rect x="437.7" y="645.4" width="1.6" height="2" fill="#333"/><rect x="455.8" y="645.4" width="1.6" height="2" fill="#333"/><rect x="473.9" y="645.4" width="1.6" height="2" fill="#333"/><rect x="492.3" y="645.4" width="1.6" height="2" fill="#333"/></svg>
<div style="position:absolute;left:418px;top:614.5px;width:77px;height:3px;box-sizing:border-box;border-top:1px solid #6a6a6a;border-bottom:1px solid #f6f6f6;background:#4a4a4a"></div>
<svg style="position:absolute;left:476px;top:609.2px" width="10" height="18" viewBox="0 0 10 18"><path d="M1 1 H7 V11.5 L4.0 15 L1 11.5 Z" fill="#d8d8d8" stroke="#f8f8f8" stroke-width="1"/><path d="M7.5 1 V11.5 L4.0 15.5" fill="none" stroke="#333" stroke-width="1.4"/></svg>
<div style="position:absolute;left:418px;top:635.5px;width:77px;height:3px;box-sizing:border-box;border-top:1px solid #6a6a6a;border-bottom:1px solid #f6f6f6;background:#4a4a4a"></div>
<svg style="position:absolute;left:432px;top:630.2px" width="10" height="18" viewBox="0 0 10 18"><path d="M1 1 H7 V11.5 L4.0 15 L1 11.5 Z" fill="#d8d8d8" stroke="#f8f8f8" stroke-width="1"/><path d="M7.5 1 V11.5 L4.0 15.5" fill="none" stroke="#333" stroke-width="1.4"/></svg>
<div style="position:absolute;left:531px;top:609.5px;width:53px;height:17.5px;background:#cbcbcb;box-sizing:border-box;border-top:1px solid #f4f4f4;border-left:1px solid #f4f4f4;border-right:2px solid #111;border-bottom:2px solid #111;box-shadow:inset 1px 1px 0 #e2e2e2;display:flex;align-items:center;justify-content:center;font-size:10.5px;color:#1a1a1a;white-space:nowrap;line-height:10.5px"><span style="display:inline-block;transform:scaleX(0.88)">MultiRX</span></div>
<div style="position:absolute;left:530px;top:639.5px;width:10px;height:10px;box-sizing:border-box;background:#fff;border-top:2px solid #666;border-left:2px solid #666;border-right:1px solid #f4f4f4;border-bottom:1px solid #f4f4f4"></div>
<svg style="position:absolute;left:531px;top:640px" width="9" height="9"><path d="M1.5 4 L3.5 6.5 L7.5 1.5" fill="none" stroke="#000" stroke-width="1.6"/></svg>
<div style="position:absolute;left:543px;top:639.27px;font-size:10.5px;line-height:10.5px;color:#222;white-space:nowrap;transform:scaleX(0.9709);transform-origin:left top;">Swap</div>
<div style="position:absolute;left:662px;top:520px;width:308px;height:138px;box-sizing:border-box;border:1px solid #b4b4b4;box-shadow:inset 1px 1px 0 #f2f2f2, 1px 1px 0 #f2f2f2"></div>
<div style="position:absolute;left:666.5px;top:518px;width:135px;height:4px;background:#d4d4d4"></div>
<div style="position:absolute;left:668.5px;top:516.62px;font-size:10px;line-height:10px;color:#1a1a1a;white-space:nowrap;transform:scaleX(0.9244);transform-origin:left top;">Mode Specific Controls - Phone</div>
<div style="position:absolute;right:484.4px;top:539.27px;font-size:10.5px;line-height:10.5px;color:#222;white-space:nowrap;text-align:right;transform:scaleX(0.8908);transform-origin:right top;">Mic Gain:</div>
<div style="position:absolute;left:725px;top:543px;width:82px;height:3px;box-sizing:border-box;border-top:1px solid #6a6a6a;border-bottom:1px solid #f6f6f6;background:#4a4a4a"></div>
<svg style="position:absolute;left:738px;top:538.5px" width="9" height="16" viewBox="0 0 9 16"><path d="M1 1 H6 V10.0 L3.5 13 L1 10.0 Z" fill="#d8d8d8" stroke="#f8f8f8" stroke-width="1"/><path d="M6.5 1 V10.0 L3.5 13.5" fill="none" stroke="#333" stroke-width="1.4"/></svg>
<div style="position:absolute;left:817px;top:538px;width:43px;height:15px;box-sizing:border-box;background:#fff;border-top:2px solid #555;border-left:2px solid #555;border-right:1px solid #f4f4f4;border-bottom:1px solid #f4f4f4;font-size:10.5px;line-height:12px;color:#111;text-align:left;padding-left:0px;white-space:nowrap;overflow:hidden"><span style="display:inline-block;transform:scaleX(0.87);transform-origin:left center">12</span></div>
<div style="position:absolute;left:847px;top:540px;width:12px;height:12px;background:#e2e2e2;box-sizing:border-box;border-right:2px solid #3a3a3a;border-bottom:2px solid #3a3a3a;border-left:1px solid #f0f0f0"></div>
<div style="position:absolute;left:848px;top:545.3px;width:10px;height:1.2px;background:#505050"></div>
<div style="position:absolute;left:851.5px;top:541.9px;width:2px;height:1.5px;background:#222"></div>
<div style="position:absolute;left:851.5px;top:547.4px;width:2px;height:1.5px;background:#222"></div>
<div style="position:absolute;left:676px;top:559px;width:42px;height:16px;background:#ffff00;border:1px solid #7a7a30;box-sizing:border-box;display:flex;align-items:center;justify-content:center;font-size:10.5px;color:#1a1a1a;white-space:nowrap;line-height:10.5px"><span style="display:inline-block;transform:scaleX(0.88)">COMP</span></div>
<div style="position:absolute;left:725px;top:564px;width:82px;height:3px;box-sizing:border-box;border-top:1px solid #6a6a6a;border-bottom:1px solid #f6f6f6;background:#4a4a4a"></div>
<svg style="position:absolute;left:732.5px;top:559.5px" width="9" height="16" viewBox="0 0 9 16"><path d="M1 1 H6 V10.0 L3.5 13 L1 10.0 Z" fill="#d8d8d8" stroke="#f8f8f8" stroke-width="1"/><path d="M6.5 1 V10.0 L3.5 13.5" fill="none" stroke="#333" stroke-width="1.4"/></svg>
<div style="position:absolute;left:817px;top:558px;width:43px;height:15px;box-sizing:border-box;background:#fff;border-top:2px solid #555;border-left:2px solid #555;border-right:1px solid #f4f4f4;border-bottom:1px solid #f4f4f4;font-size:10.5px;line-height:12px;color:#111;text-align:left;padding-left:0px;white-space:nowrap;overflow:hidden"><span style="display:inline-block;transform:scaleX(0.87);transform-origin:left center">2</span></div>
<div style="position:absolute;left:847px;top:560px;width:12px;height:12px;background:#e2e2e2;box-sizing:border-box;border-right:2px solid #3a3a3a;border-bottom:2px solid #3a3a3a;border-left:1px solid #f0f0f0"></div>
<div style="position:absolute;left:848px;top:565.3px;width:10px;height:1.2px;background:#505050"></div>
<div style="position:absolute;left:851.5px;top:561.9px;width:2px;height:1.5px;background:#222"></div>
<div style="position:absolute;left:851.5px;top:567.4px;width:2px;height:1.5px;background:#222"></div>
<div style="position:absolute;left:676px;top:580px;width:42px;height:16px;background:#cbcbcb;box-sizing:border-box;border-top:1px solid #f4f4f4;border-left:1px solid #f4f4f4;border-right:2px solid #111;border-bottom:2px solid #111;box-shadow:inset 1px 1px 0 #e2e2e2;display:flex;align-items:center;justify-content:center;font-size:10.5px;color:#1a1a1a;white-space:nowrap;line-height:10.5px"><span style="display:inline-block;transform:scaleX(0.88)">CPDR</span></div>
<div style="position:absolute;left:725px;top:585px;width:82px;height:3px;box-sizing:border-box;border-top:1px solid #6a6a6a;border-bottom:1px solid #f6f6f6;background:#4a4a4a"></div>
<svg style="position:absolute;left:786px;top:580.5px" width="9" height="16" viewBox="0 0 9 16"><path d="M1 1 H6 V10.0 L3.5 13 L1 10.0 Z" fill="#d8d8d8" stroke="#f8f8f8" stroke-width="1"/><path d="M6.5 1 V10.0 L3.5 13.5" fill="none" stroke="#333" stroke-width="1.4"/></svg>
<div style="position:absolute;left:817px;top:580px;width:43px;height:15px;box-sizing:border-box;background:#fff;border-top:2px solid #555;border-left:2px solid #555;border-right:1px solid #f4f4f4;border-bottom:1px solid #f4f4f4;font-size:10.5px;line-height:12px;color:#111;text-align:left;padding-left:0px;white-space:nowrap;overflow:hidden"><span style="display:inline-block;transform:scaleX(0.87);transform-origin:left center">8</span></div>
<div style="position:absolute;left:847px;top:582px;width:12px;height:12px;background:#e2e2e2;box-sizing:border-box;border-right:2px solid #3a3a3a;border-bottom:2px solid #3a3a3a;border-left:1px solid #f0f0f0"></div>
<div style="position:absolute;left:848px;top:587.3px;width:10px;height:1.2px;background:#505050"></div>
<div style="position:absolute;left:851.5px;top:583.9px;width:2px;height:1.5px;background:#222"></div>
<div style="position:absolute;left:851.5px;top:589.4px;width:2px;height:1.5px;background:#222"></div>
<div style="position:absolute;left:676px;top:602px;width:42px;height:16px;background:#cbcbcb;box-sizing:border-box;border-top:1px solid #f4f4f4;border-left:1px solid #f4f4f4;border-right:2px solid #111;border-bottom:2px solid #111;box-shadow:inset 1px 1px 0 #e2e2e2;display:flex;align-items:center;justify-content:center;font-size:10.5px;color:#1a1a1a;white-space:nowrap;line-height:10.5px"><span style="display:inline-block;transform:scaleX(0.88)">VOX</span></div>
<div style="position:absolute;left:725px;top:606.5px;width:82px;height:3px;box-sizing:border-box;border-top:1px solid #6a6a6a;border-bottom:1px solid #f6f6f6;background:#4a4a4a"></div>
<svg style="position:absolute;left:750px;top:602.0px" width="9" height="16" viewBox="0 0 9 16"><path d="M1 1 H6 V10.0 L3.5 13 L1 10.0 Z" fill="#d8d8d8" stroke="#f8f8f8" stroke-width="1"/><path d="M6.5 1 V10.0 L3.5 13.5" fill="none" stroke="#333" stroke-width="1.4"/></svg>
<div style="position:absolute;left:727.5px;top:615.5px;width:77.0px;height:2.5px;background:#000"></div>
<div style="position:absolute;left:817px;top:601px;width:43px;height:15px;box-sizing:border-box;background:#fff;border-top:2px solid #555;border-left:2px solid #555;border-right:1px solid #f4f4f4;border-bottom:1px solid #f4f4f4;font-size:10.5px;line-height:12px;color:#111;text-align:left;padding-left:0px;white-space:nowrap;overflow:hidden"><span style="display:inline-block;transform:scaleX(0.87);transform-origin:left center">321</span></div>
<div style="position:absolute;left:847px;top:603px;width:12px;height:12px;background:#e2e2e2;box-sizing:border-box;border-right:2px solid #3a3a3a;border-bottom:2px solid #3a3a3a;border-left:1px solid #f0f0f0"></div>
<div style="position:absolute;left:848px;top:608.3px;width:10px;height:1.2px;background:#505050"></div>
<div style="position:absolute;left:851.5px;top:604.9px;width:2px;height:1.5px;background:#222"></div>
<div style="position:absolute;left:851.5px;top:610.4px;width:2px;height:1.5px;background:#222"></div>
<div style="position:absolute;left:676px;top:623.5px;width:42px;height:16.0px;background:#cbcbcb;box-sizing:border-box;border-top:1px solid #f4f4f4;border-left:1px solid #f4f4f4;border-right:2px solid #111;border-bottom:2px solid #111;box-shadow:inset 1px 1px 0 #e2e2e2;display:flex;align-items:center;justify-content:center;font-size:10.5px;color:#1a1a1a;white-space:nowrap;line-height:10.5px"><span style="display:inline-block;transform:scaleX(0.88)">GATE</span></div>
<div style="position:absolute;left:725px;top:628.5px;width:82px;height:3px;box-sizing:border-box;border-top:1px solid #6a6a6a;border-bottom:1px solid #f6f6f6;background:#4a4a4a"></div>
<svg style="position:absolute;left:793.5px;top:624.0px" width="9" height="16" viewBox="0 0 9 16"><path d="M1 1 H6 V10.0 L3.5 13 L1 10.0 Z" fill="#d8d8d8" stroke="#f8f8f8" stroke-width="1"/><path d="M6.5 1 V10.0 L3.5 13.5" fill="none" stroke="#333" stroke-width="1.4"/></svg>
<div style="position:absolute;left:727.5px;top:636.5px;width:77.0px;height:3.0px;background:#000"></div>
<div style="position:absolute;left:817px;top:623px;width:43px;height:15px;box-sizing:border-box;background:#fff;border-top:2px solid #555;border-left:2px solid #555;border-right:1px solid #f4f4f4;border-bottom:1px solid #f4f4f4;font-size:10.5px;line-height:12px;color:#111;text-align:left;padding-left:0px;white-space:nowrap;overflow:hidden"><span style="display:inline-block;transform:scaleX(0.87);transform-origin:left center">-15</span></div>
<div style="position:absolute;left:847px;top:625px;width:12px;height:12px;background:#e2e2e2;box-sizing:border-box;border-right:2px solid #3a3a3a;border-bottom:2px solid #3a3a3a;border-left:1px solid #f0f0f0"></div>
<div style="position:absolute;left:848px;top:630.3px;width:10px;height:1.2px;background:#505050"></div>
<div style="position:absolute;left:851.5px;top:626.9px;width:2px;height:1.5px;background:#222"></div>
<div style="position:absolute;left:851.5px;top:632.4px;width:2px;height:1.5px;background:#222"></div>
<div style="position:absolute;left:875.5px;top:532.27px;font-size:10.5px;line-height:10.5px;color:#222;white-space:nowrap;transform:scaleX(0.9008);transform-origin:left top;">Transmit Profile:</div>
<div style="position:absolute;left:869px;top:545px;width:87px;height:15px;box-sizing:border-box;background:#fff;border-top:2px solid #555;border-left:2px solid #555;border-right:1px solid #f4f4f4;border-bottom:1px solid #f4f4f4;font-size:10.5px;line-height:12px;color:#111;text-align:left;padding-left:2px;white-space:nowrap;overflow:hidden"><span style="display:inline-block;transform:scaleX(0.87);transform-origin:left center">Classic 2,8k-hf</span></div>
<div style="position:absolute;left:941px;top:547px;width:14px;height:12px;background:#dcdcdc;box-sizing:border-box;border-top:1px solid #f4f4f4;border-left:1px solid #f4f4f4;border-right:2px solid #222;border-bottom:2px solid #222"></div>
<div style="position:absolute;left:944px;top:550.5px;width:0;height:0;border-left:4px solid transparent;border-right:4px solid transparent;border-top:4px solid #000"></div>
<div style="position:absolute;left:869px;top:574px;width:10px;height:10px;box-sizing:border-box;background:#fff;border-top:2px solid #666;border-left:2px solid #666;border-right:1px solid #f4f4f4;border-bottom:1px solid #f4f4f4"></div>
<div style="position:absolute;left:881.5px;top:569.27px;font-size:10.5px;line-height:10.5px;color:#222;white-space:nowrap;transform:scaleX(0.8827);transform-origin:left top;">Show TX Filter on</div>
<div style="position:absolute;left:881.5px;top:580.27px;font-size:10.5px;line-height:10.5px;color:#222;white-space:nowrap;transform:scaleX(0.9147);transform-origin:left top;">Display</div>
<div style="position:absolute;left:869px;top:595px;width:44px;height:16px;background:#ffff00;border:1px solid #7a7a30;box-sizing:border-box;display:flex;align-items:center;justify-content:center;font-size:10.5px;color:#1a1a1a;white-space:nowrap;line-height:10.5px"><span style="display:inline-block;transform:scaleX(0.88)">RX EQ</span></div>
<div style="position:absolute;left:920px;top:595px;width:44px;height:16px;background:#ffff00;border:1px solid #7a7a30;box-sizing:border-box;display:flex;align-items:center;justify-content:center;font-size:10.5px;color:#1a1a1a;white-space:nowrap;line-height:10.5px"><span style="display:inline-block;transform:scaleX(0.88)">TX EQ</span></div>
<div style="position:absolute;left:869px;top:612px;width:59px;height:17px;background:#cbcbcb;box-sizing:border-box;border-top:1px solid #f4f4f4;border-left:1px solid #f4f4f4;border-right:2px solid #111;border-bottom:2px solid #111;box-shadow:inset 1px 1px 0 #e2e2e2;display:flex;align-items:center;justify-content:center;font-size:10.5px;color:#e03030;white-space:nowrap;line-height:10.5px"><span style="display:inline-block;transform:scaleX(0.88)">RxFilt&gt;Tx</span></div>
<div style="position:absolute;left:928px;top:612px;width:36px;height:17px;background:#cbcbcb;box-sizing:border-box;border-top:1px solid #f4f4f4;border-left:1px solid #f4f4f4;border-right:2px solid #111;border-bottom:2px solid #111;box-shadow:inset 1px 1px 0 #e2e2e2;display:flex;align-items:center;justify-content:center;font-size:10.5px;color:#1a1a1a;white-space:nowrap;line-height:10.5px"><span style="display:inline-block;transform:scaleX(0.88)">VAC</span></div>
<div style="position:absolute;left:928px;top:630px;width:36px;height:16px;background:#cbcbcb;box-sizing:border-box;border-top:1px solid #f4f4f4;border-left:1px solid #f4f4f4;border-right:2px solid #111;border-bottom:2px solid #111;box-shadow:inset 1px 1px 0 #e2e2e2;display:flex;align-items:center;justify-content:center;font-size:10.5px;color:#1a1a1a;white-space:nowrap;line-height:10.5px"><span style="display:inline-block;transform:scaleX(0.88)">DX</span></div>
</body></html>
